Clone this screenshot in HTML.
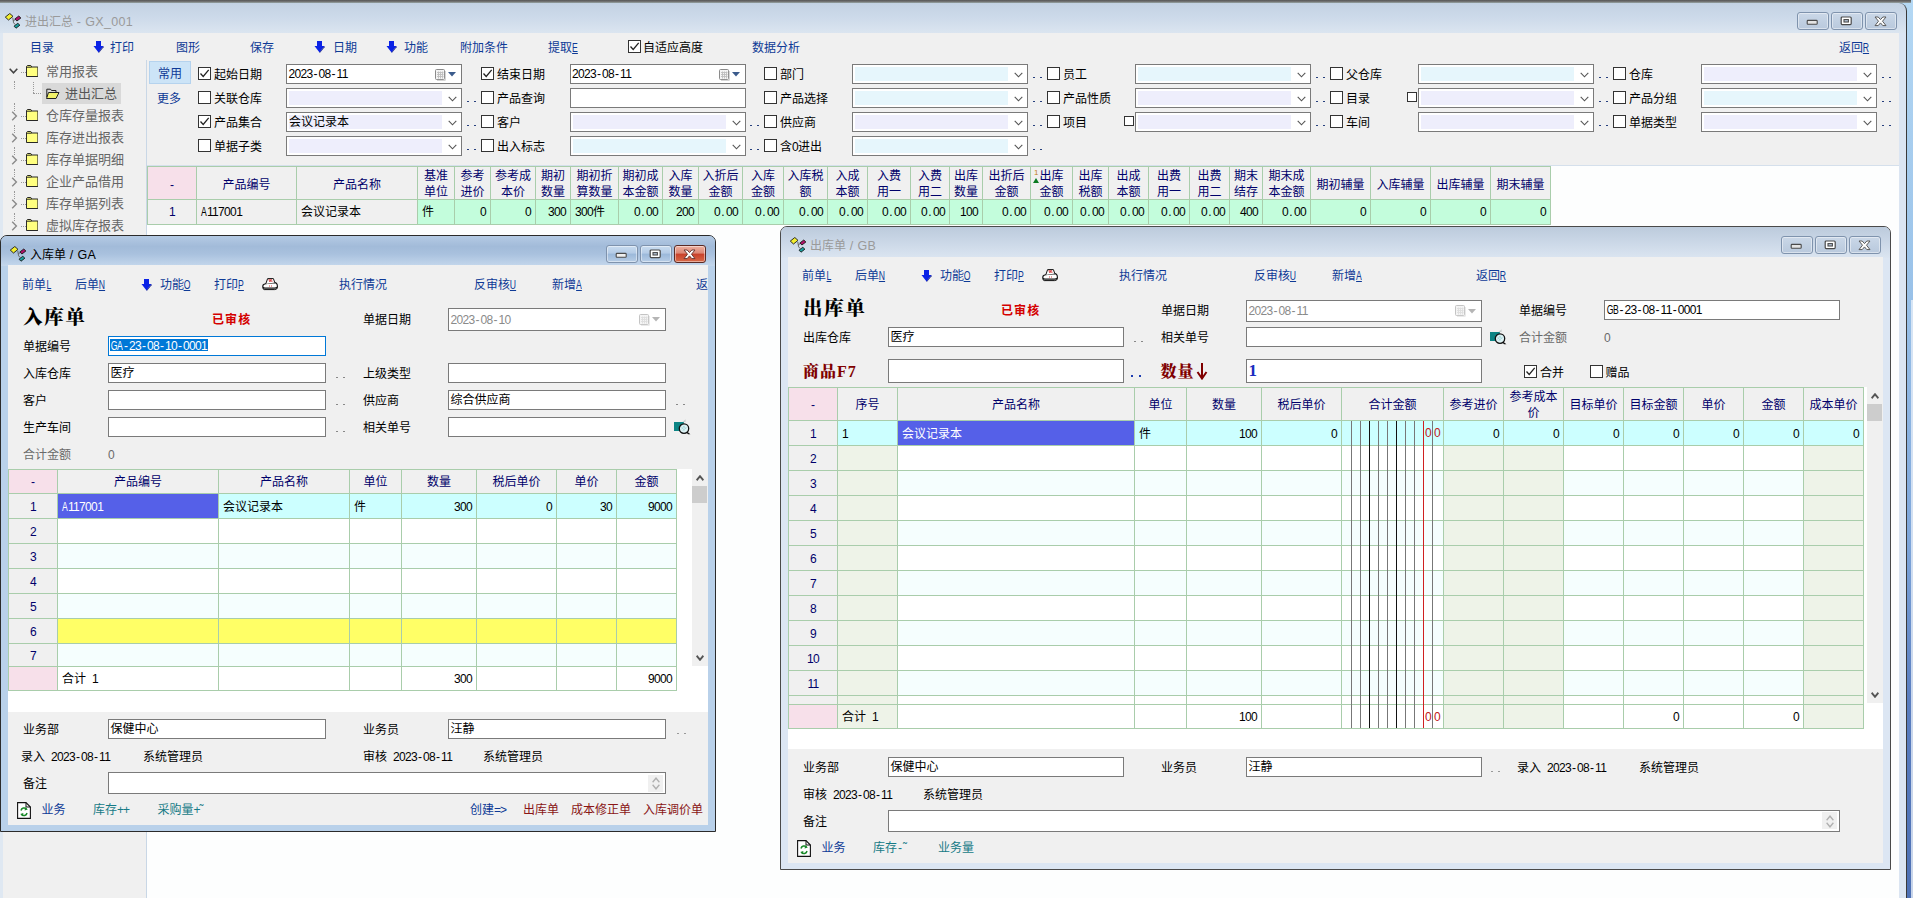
<!DOCTYPE html>
<html lang="zh-CN"><head><meta charset="utf-8"><title>进出汇总 - GX_001</title><style>
html,body{margin:0;padding:0;}
body{width:1913px;height:898px;overflow:hidden;background:#fff;position:relative;font-family:"Liberation Sans","Noto Sans CJK SC",sans-serif;font-size:12px;color:#000;}
#r{position:absolute;left:0;top:0;width:1913px;height:898px;overflow:hidden;}
#r div,#r svg{position:absolute;box-sizing:content-box;}
#r span{position:static;}
.t{white-space:nowrap;font-size:12px;}
.s{font-family:"Liberation Sans","Noto Sans CJK SC",sans-serif;font-size:12px;}
.a{letter-spacing:-0.67px;}
.u{text-decoration:underline;}
.y .ya{font-size:12.5px;letter-spacing:0.35px;}
.h{display:inline-block;width:6px;text-align:center;letter-spacing:0;white-space:pre;}
.hl{display:inline-block;width:10px;margin:0 -2px;text-align:center;letter-spacing:0;transform:scaleX(.72);}
.bl{color:#0e3a96;}
.nv{color:#00006a;}
.gy{color:#6a6a6a;}
.tl{color:#167a86;}
.dr{color:#8a1616;}
.y{font-family:"Liberation Sans","Noto Sans CJK SC",sans-serif;font-size:12px;}
.tr{font-family:"Liberation Sans","Noto Sans CJK SC",sans-serif;font-size:13px;color:#666;}
.big{font-family:"Liberation Serif","Noto Serif CJK SC",serif;font-weight:900;font-size:19.5px;letter-spacing:1.7px;}
.rb{font-weight:bold;color:#d40000;letter-spacing:1.1px;}
.b16{font-family:"Liberation Serif","Noto Serif CJK SC",serif;font-weight:900;font-size:16px;color:#800000;letter-spacing:1px;}
.b16 .a{letter-spacing:1px;}
.c{text-align:center;}
.r{text-align:right;}
</style></head><body><div id="r">
<div style="left:0px;top:0px;width:1913px;height:898px;background:#fdfefe;"></div>
<div style="left:1896px;top:0px;width:17px;height:898px;background:linear-gradient(#b4d8f4 0%,#9cc4ea 30%,#7ea6da 60%,#5a7ec0 78%,#4d70b4 100%);"></div>
<div style="left:1911px;top:300px;width:2px;height:598px;background:rgba(230,238,248,.8);"></div>
<div style="left:0px;top:3px;width:1906px;height:30px;background:linear-gradient(#c3d2e3 0%,#cddaea 50%,#dbe5f0 100%);border-radius:0 8px 0 0;border-right:1px solid #3a3a3a;"></div>
<div style="left:0px;top:0px;width:1911px;height:3px;background:linear-gradient(#555,#777 60%,#9aa);"></div>
<div style="left:0px;top:33px;width:3px;height:865px;background:#dfe8f2;"></div>
<div style="left:3px;top:33px;width:1896px;height:133px;background:#f0f0f0;"></div>
<div style="left:3px;top:60px;width:143px;height:838px;background:#f0f0f0;"></div>
<div style="left:146px;top:60px;width:1px;height:838px;background:#c9d7e6;"></div>
<div style="left:147px;top:165px;width:1752px;height:1px;background:#d5e0ec;"></div>
<div style="left:147px;top:166px;width:1752px;height:732px;background:#fdfefe;"></div>
<div style="left:1899px;top:33px;width:7px;height:865px;background:#dbe5f2;"></div>
<div style="left:1906px;top:30px;width:1px;height:868px;background:#3a3a3a;"></div>
<svg style="left:5px;top:13px" width="17" height="16" viewBox="0 0 17 16"><path d="M7.8 5 L8.6 9.8 L10.2 11.6 M8.3 7.6 L10.4 6.6" fill="none" stroke="#666" stroke-width="1"/><path d="M0.3 4.1 L4.8 0.5 L8 3.4 L3.5 7 Z" fill="#f4ef2e" stroke="#1a1a1a" stroke-width="0.9"/><path d="M9.9 5.9 L13.8 3 L15.9 5 L11.9 8 Z" fill="#b01068" stroke="#1a1a1a" stroke-width="0.9"/><path d="M9 13.2 L12.8 10.3 L14.9 12.2 L11 15.2 Z" fill="#18a0a0" stroke="#1a1a1a" stroke-width="0.9"/></svg>
<div class="t y" style="left:25px;top:13.5px;line-height:16px;height:16px;color:#9a9a9a;">进出汇总<span class="ya"> - GX_001</span></div>
<div style="left:1797px;top:12px;width:29.5px;height:15.5px;border:1px solid #7f93ad;border-radius:3px;box-shadow:inset 0 0 0 1px rgba(255,255,255,.45);background:linear-gradient(#cbd8e8 0%,#c1d0e2 50%,#b9c9dd 100%);"><svg style="left:8px;top:6px" width="13" height="7" viewBox="0 0 13 7"><rect x="1.2" y="1.4" width="10" height="3.8" rx="0.8" fill="#e4e4e4" stroke="#4a4a4a" stroke-width="1.1"/></svg></div>
<div style="left:1831px;top:12px;width:29.5px;height:15.5px;border:1px solid #7f93ad;border-radius:3px;box-shadow:inset 0 0 0 1px rgba(255,255,255,.45);background:linear-gradient(#cbd8e8 0%,#c1d0e2 50%,#b9c9dd 100%);"><svg style="left:8px;top:3px" width="13" height="10" viewBox="0 0 13 10"><rect x="1.2" y="1" width="10" height="7.6" rx="1" fill="#fff" stroke="#4a4a4a" stroke-width="1.2"/><rect x="4" y="3.6" width="4.4" height="2.4" fill="#b8c8dc" stroke="#4a4a4a" stroke-width="1.1"/></svg></div>
<div style="left:1865px;top:12px;width:29.5px;height:15.5px;border:1px solid #7f93ad;border-radius:3px;box-shadow:inset 0 0 0 1px rgba(255,255,255,.45);background:linear-gradient(#cbd8e8 0%,#c1d0e2 50%,#b9c9dd 100%);"><svg style="left:8px;top:2.5px" width="13" height="11" viewBox="0 0 13 11"><path d="M1 1 L4.2 1 L6.5 3.6 L8.8 1 L12 1 L8.5 5.2 L12 9.6 L8.8 9.6 L6.5 6.9 L4.2 9.6 L1 9.6 L4.5 5.2 Z" fill="#fff" stroke="#5a5a5a" stroke-width="1"/></svg></div>
<div class="t s bl" style="left:30px;top:40.5px;line-height:14px;height:14px;">目录</div>
<svg style="left:93px;top:41px" width="11" height="12" viewBox="0 0 11 12"><path d="M3 0 H8 V5 H10.5 L5.5 11.5 L0.5 5 H3 Z" fill="#0a22e6"/><path d="M5.5 11.5 L10.5 5 L10.5 6.2 L5.8 12 Z" fill="#061280"/></svg>
<div class="t s bl" style="left:110px;top:40.5px;line-height:14px;height:14px;">打印</div>
<div class="t s bl" style="left:176px;top:40.5px;line-height:14px;height:14px;">图形</div>
<div class="t s bl" style="left:250px;top:40.5px;line-height:14px;height:14px;">保存</div>
<svg style="left:314px;top:41px" width="11" height="12" viewBox="0 0 11 12"><path d="M3 0 H8 V5 H10.5 L5.5 11.5 L0.5 5 H3 Z" fill="#0a22e6"/><path d="M5.5 11.5 L10.5 5 L10.5 6.2 L5.8 12 Z" fill="#061280"/></svg>
<div class="t s bl" style="left:333px;top:40.5px;line-height:14px;height:14px;">日期</div>
<svg style="left:386px;top:41px" width="11" height="12" viewBox="0 0 11 12"><path d="M3 0 H8 V5 H10.5 L5.5 11.5 L0.5 5 H3 Z" fill="#0a22e6"/><path d="M5.5 11.5 L10.5 5 L10.5 6.2 L5.8 12 Z" fill="#061280"/></svg>
<div class="t s bl" style="left:404px;top:40.5px;line-height:14px;height:14px;">功能</div>
<div class="t s bl" style="left:460px;top:40.5px;line-height:14px;height:14px;">附加条件</div>
<div class="t s bl" style="left:548px;top:40.5px;line-height:14px;height:14px;">提取<span class="a"><span class="hl u">E</span></span></div>
<div style="left:628px;top:40px;width:11px;height:11px;border:1px solid #333;background:#fff;"><svg style="left:0;top:0" width="11" height="11" viewBox="0 0 11 11"><path d="M1.5 5.5 L4.2 8.5 L9.7 1.8" fill="none" stroke="#222" stroke-width="1.3"/></svg></div>
<div class="t s" style="left:643px;top:40.5px;line-height:14px;height:14px;">自适应高度</div>
<div class="t s bl" style="left:752px;top:40.5px;line-height:14px;height:14px;">数据分析</div>
<div class="t s bl" style="left:1839px;top:40.5px;line-height:14px;height:14px;">返回<span class="a"><span class="hl u">R</span></span></div>
<div style="left:14px;top:81px;width:0px;height:8px;border-left:1px dotted #999;"></div>
<div style="left:14px;top:103px;width:0px;height:8px;border-left:1px dotted #999;"></div>
<div style="left:14px;top:125px;width:0px;height:8px;border-left:1px dotted #999;"></div>
<div style="left:14px;top:147px;width:0px;height:8px;border-left:1px dotted #999;"></div>
<div style="left:14px;top:169px;width:0px;height:8px;border-left:1px dotted #999;"></div>
<div style="left:14px;top:191px;width:0px;height:8px;border-left:1px dotted #999;"></div>
<div style="left:14px;top:213px;width:0px;height:8px;border-left:1px dotted #999;"></div>
<svg style="left:9px;top:68px" width="9" height="6" viewBox="0 0 9 6" preserveAspectRatio="none"><path d="M0.7 0.8 L4.5 4.8 L8.3 0.8" fill="none" stroke="#444" stroke-width="1.6"/></svg>
<div style="left:21px;top:71.5px;width:5px;height:0px;border-top:1px dotted #999;"></div>
<svg style="left:26px;top:65px" width="12.4" height="12" viewBox="0 0 13 12" preserveAspectRatio="none"><path d="M0.5 11.5 V1.5 L1.5 0.5 H5 L6 2 H12.5 V11.5 Z" fill="#ffff80" stroke="#222" stroke-width="1"/><path d="M0.5 2.2 H6" stroke="#222" stroke-width="1"/></svg>
<div class="t tr" style="left:46px;top:62.5px;line-height:18px;height:18px;">常用报表</div>
<div style="left:33px;top:93px;width:10px;height:0px;border-top:1px dotted #999;"></div>
<div style="left:33px;top:82px;width:0px;height:11px;border-left:1px dotted #999;"></div>
<div style="left:42px;top:82.5px;width:79px;height:21px;background:#d9d9d9;"></div>
<svg style="left:46px;top:88px" width="14" height="12" viewBox="0 0 14 12"><path d="M0.5 10.5 L2.5 4.5 H13 L10 10.5 Z" fill="#f2f26a" stroke="#222" stroke-width="1"/><path d="M0.8 9 V1.2 H4.5 L5.5 2.5 H10 V4.5" fill="none" stroke="#222" stroke-width="1"/></svg>
<div class="t tr" style="left:65px;top:84.5px;line-height:18px;height:18px;color:#555;">进出汇总</div>
<svg style="left:11px;top:110.5px" width="7" height="10" viewBox="0 0 7 10"><path d="M1.2 0.8 L5.4 5 L1.2 9.2" fill="none" stroke="#8a8a8a" stroke-width="1.4"/></svg>
<div style="left:21px;top:115.5px;width:5px;height:0px;border-top:1px dotted #999;"></div>
<svg style="left:26px;top:109px" width="12.4" height="12" viewBox="0 0 13 12" preserveAspectRatio="none"><path d="M0.5 11.5 V1.5 L1.5 0.5 H5 L6 2 H12.5 V11.5 Z" fill="#ffff80" stroke="#222" stroke-width="1"/><path d="M0.5 2.2 H6" stroke="#222" stroke-width="1"/></svg>
<div class="t tr" style="left:46px;top:106.5px;line-height:18px;height:18px;">仓库存量报表</div>
<svg style="left:11px;top:132.5px" width="7" height="10" viewBox="0 0 7 10"><path d="M1.2 0.8 L5.4 5 L1.2 9.2" fill="none" stroke="#8a8a8a" stroke-width="1.4"/></svg>
<div style="left:21px;top:137.5px;width:5px;height:0px;border-top:1px dotted #999;"></div>
<svg style="left:26px;top:131px" width="12.4" height="12" viewBox="0 0 13 12" preserveAspectRatio="none"><path d="M0.5 11.5 V1.5 L1.5 0.5 H5 L6 2 H12.5 V11.5 Z" fill="#ffff80" stroke="#222" stroke-width="1"/><path d="M0.5 2.2 H6" stroke="#222" stroke-width="1"/></svg>
<div class="t tr" style="left:46px;top:128.5px;line-height:18px;height:18px;">库存进出报表</div>
<svg style="left:11px;top:154.5px" width="7" height="10" viewBox="0 0 7 10"><path d="M1.2 0.8 L5.4 5 L1.2 9.2" fill="none" stroke="#8a8a8a" stroke-width="1.4"/></svg>
<div style="left:21px;top:159.5px;width:5px;height:0px;border-top:1px dotted #999;"></div>
<svg style="left:26px;top:153px" width="12.4" height="12" viewBox="0 0 13 12" preserveAspectRatio="none"><path d="M0.5 11.5 V1.5 L1.5 0.5 H5 L6 2 H12.5 V11.5 Z" fill="#ffff80" stroke="#222" stroke-width="1"/><path d="M0.5 2.2 H6" stroke="#222" stroke-width="1"/></svg>
<div class="t tr" style="left:46px;top:150.5px;line-height:18px;height:18px;">库存单据明细</div>
<svg style="left:11px;top:176.5px" width="7" height="10" viewBox="0 0 7 10"><path d="M1.2 0.8 L5.4 5 L1.2 9.2" fill="none" stroke="#8a8a8a" stroke-width="1.4"/></svg>
<div style="left:21px;top:181.5px;width:5px;height:0px;border-top:1px dotted #999;"></div>
<svg style="left:26px;top:175px" width="12.4" height="12" viewBox="0 0 13 12" preserveAspectRatio="none"><path d="M0.5 11.5 V1.5 L1.5 0.5 H5 L6 2 H12.5 V11.5 Z" fill="#ffff80" stroke="#222" stroke-width="1"/><path d="M0.5 2.2 H6" stroke="#222" stroke-width="1"/></svg>
<div class="t tr" style="left:46px;top:172.5px;line-height:18px;height:18px;">企业产品借用</div>
<svg style="left:11px;top:198.5px" width="7" height="10" viewBox="0 0 7 10"><path d="M1.2 0.8 L5.4 5 L1.2 9.2" fill="none" stroke="#8a8a8a" stroke-width="1.4"/></svg>
<div style="left:21px;top:203.5px;width:5px;height:0px;border-top:1px dotted #999;"></div>
<svg style="left:26px;top:197px" width="12.4" height="12" viewBox="0 0 13 12" preserveAspectRatio="none"><path d="M0.5 11.5 V1.5 L1.5 0.5 H5 L6 2 H12.5 V11.5 Z" fill="#ffff80" stroke="#222" stroke-width="1"/><path d="M0.5 2.2 H6" stroke="#222" stroke-width="1"/></svg>
<div class="t tr" style="left:46px;top:194.5px;line-height:18px;height:18px;">库存单据列表</div>
<svg style="left:11px;top:220.5px" width="7" height="10" viewBox="0 0 7 10"><path d="M1.2 0.8 L5.4 5 L1.2 9.2" fill="none" stroke="#8a8a8a" stroke-width="1.4"/></svg>
<div style="left:21px;top:225.5px;width:5px;height:0px;border-top:1px dotted #999;"></div>
<svg style="left:26px;top:219px" width="12.4" height="12" viewBox="0 0 13 12" preserveAspectRatio="none"><path d="M0.5 11.5 V1.5 L1.5 0.5 H5 L6 2 H12.5 V11.5 Z" fill="#ffff80" stroke="#222" stroke-width="1"/><path d="M0.5 2.2 H6" stroke="#222" stroke-width="1"/></svg>
<div class="t tr" style="left:46px;top:216.5px;line-height:18px;height:18px;">虚拟库存报表</div>
<div style="left:149px;top:61px;width:40px;height:21px;background:#cce4f7;border:1px solid #b5d3ee;"></div>
<div class="t s bl" style="left:158px;top:66.5px;line-height:14px;height:14px;">常用</div>
<div class="t s bl" style="left:157px;top:92px;line-height:14px;height:14px;">更多</div>
<div style="left:198px;top:67px;width:11px;height:11px;border:1px solid #333;background:#fff;"><svg style="left:0;top:0" width="11" height="11" viewBox="0 0 11 11"><path d="M1.5 5.5 L4.2 8.5 L9.7 1.8" fill="none" stroke="#222" stroke-width="1.3"/></svg></div>
<div class="t s" style="left:214px;top:67.5px;line-height:14px;height:14px;">起始日期</div>
<div style="left:286px;top:64px;width:174px;height:18px;border:1px solid #7a7a7a;background:#fff;"></div>
<div class="t s" style="left:288.5px;top:67px;line-height:14px;height:14px;"><span class="a">2023<span class="h">-</span>08<span class="h">-</span>11</span></div>
<svg style="left:435px;top:69px" width="11" height="12" viewBox="0 0 11 12"><rect x="0.5" y="0.5" width="9" height="10" rx="1" fill="#f4f4f4" stroke="#8a8a8a"/><path d="M2 3.5 H8.5 M2 5.5 H8.5 M2 7.5 H8.5 M3.5 2.5 V9.5 M5.5 2.5 V9.5 M7.5 2.5 V9.5" stroke="#bdbdbd" stroke-width="0.9"/><path d="M10.3 2 V11.3 H2" fill="none" stroke="#bdbdbd" stroke-width="0.8"/></svg>
<svg style="left:448px;top:72px" width="8" height="5" viewBox="0 0 8 5"><path d="M0 0 H8 L4 4.5 Z" fill="#3b5b8c"/></svg>
<div style="left:481px;top:67px;width:11px;height:11px;border:1px solid #333;background:#fff;"><svg style="left:0;top:0" width="11" height="11" viewBox="0 0 11 11"><path d="M1.5 5.5 L4.2 8.5 L9.7 1.8" fill="none" stroke="#222" stroke-width="1.3"/></svg></div>
<div class="t s" style="left:497px;top:67.5px;line-height:14px;height:14px;">结束日期</div>
<div style="left:569.5px;top:64px;width:174px;height:18px;border:1px solid #7a7a7a;background:#fff;"></div>
<div class="t s" style="left:572px;top:67px;line-height:14px;height:14px;"><span class="a">2023<span class="h">-</span>08<span class="h">-</span>11</span></div>
<svg style="left:718.5px;top:69px" width="11" height="12" viewBox="0 0 11 12"><rect x="0.5" y="0.5" width="9" height="10" rx="1" fill="#f4f4f4" stroke="#8a8a8a"/><path d="M2 3.5 H8.5 M2 5.5 H8.5 M2 7.5 H8.5 M3.5 2.5 V9.5 M5.5 2.5 V9.5 M7.5 2.5 V9.5" stroke="#bdbdbd" stroke-width="0.9"/><path d="M10.3 2 V11.3 H2" fill="none" stroke="#bdbdbd" stroke-width="0.8"/></svg>
<svg style="left:731.5px;top:72px" width="8" height="5" viewBox="0 0 8 5"><path d="M0 0 H8 L4 4.5 Z" fill="#3b5b8c"/></svg>
<div style="left:764px;top:67px;width:11px;height:11px;border:1px solid #333;background:#fff;"></div>
<div class="t s" style="left:780px;top:67.5px;line-height:14px;height:14px;">部门</div>
<div style="left:852px;top:64px;width:174px;height:18px;border:1px solid #7a7a7a;background:#fff;"></div>
<div style="left:855px;top:67px;width:153px;height:14px;background:#e6f6fc;"></div>
<svg style="left:1014px;top:72px" width="9" height="6" viewBox="0 0 9 6" preserveAspectRatio="none"><path d="M0.7 0.8 L4.5 4.8 L8.3 0.8" fill="none" stroke="#555" stroke-width="1.1"/></svg>
<div style="left:1033px;top:77px;width:2px;height:1.3px;background:#27407e;"></div>
<div style="left:1040px;top:77px;width:2px;height:1.3px;background:#27407e;"></div>
<div style="left:1047px;top:67px;width:11px;height:11px;border:1px solid #333;background:#fff;"></div>
<div class="t s" style="left:1063px;top:67.5px;line-height:14px;height:14px;">员工</div>
<div style="left:1135px;top:64px;width:174px;height:18px;border:1px solid #7a7a7a;background:#fff;"></div>
<div style="left:1138px;top:67px;width:153px;height:14px;background:#e6f6fc;"></div>
<svg style="left:1297px;top:72px" width="9" height="6" viewBox="0 0 9 6" preserveAspectRatio="none"><path d="M0.7 0.8 L4.5 4.8 L8.3 0.8" fill="none" stroke="#555" stroke-width="1.1"/></svg>
<div style="left:1316px;top:77px;width:2px;height:1.3px;background:#27407e;"></div>
<div style="left:1323px;top:77px;width:2px;height:1.3px;background:#27407e;"></div>
<div style="left:1330px;top:67px;width:11px;height:11px;border:1px solid #333;background:#fff;"></div>
<div class="t s" style="left:1346px;top:67.5px;line-height:14px;height:14px;">父仓库</div>
<div style="left:1418px;top:64px;width:174px;height:18px;border:1px solid #7a7a7a;background:#fff;"></div>
<div style="left:1421px;top:67px;width:153px;height:14px;background:#e6f6fc;"></div>
<svg style="left:1580px;top:72px" width="9" height="6" viewBox="0 0 9 6" preserveAspectRatio="none"><path d="M0.7 0.8 L4.5 4.8 L8.3 0.8" fill="none" stroke="#555" stroke-width="1.1"/></svg>
<div style="left:1599px;top:77px;width:2px;height:1.3px;background:#27407e;"></div>
<div style="left:1606px;top:77px;width:2px;height:1.3px;background:#27407e;"></div>
<div style="left:1613px;top:67px;width:11px;height:11px;border:1px solid #333;background:#fff;"></div>
<div class="t s" style="left:1629px;top:67.5px;line-height:14px;height:14px;">仓库</div>
<div style="left:1701px;top:64px;width:174px;height:18px;border:1px solid #7a7a7a;background:#fff;"></div>
<div style="left:1704px;top:67px;width:153px;height:14px;background:#eeeefc;"></div>
<svg style="left:1863px;top:72px" width="9" height="6" viewBox="0 0 9 6" preserveAspectRatio="none"><path d="M0.7 0.8 L4.5 4.8 L8.3 0.8" fill="none" stroke="#555" stroke-width="1.1"/></svg>
<div style="left:1882px;top:77px;width:2px;height:1.3px;background:#27407e;"></div>
<div style="left:1889px;top:77px;width:2px;height:1.3px;background:#27407e;"></div>
<div style="left:198px;top:91px;width:11px;height:11px;border:1px solid #333;background:#fff;"></div>
<div class="t s" style="left:214px;top:91.5px;line-height:14px;height:14px;">关联仓库</div>
<div style="left:286px;top:88px;width:174px;height:18px;border:1px solid #7a7a7a;background:#fff;"></div>
<div style="left:289px;top:91px;width:153px;height:14px;background:#eeeefc;"></div>
<svg style="left:448px;top:96px" width="9" height="6" viewBox="0 0 9 6" preserveAspectRatio="none"><path d="M0.7 0.8 L4.5 4.8 L8.3 0.8" fill="none" stroke="#555" stroke-width="1.1"/></svg>
<div style="left:467px;top:101px;width:2px;height:1.3px;background:#27407e;"></div>
<div style="left:474px;top:101px;width:2px;height:1.3px;background:#27407e;"></div>
<div style="left:481px;top:91px;width:11px;height:11px;border:1px solid #333;background:#fff;"></div>
<div class="t s" style="left:497px;top:91.5px;line-height:14px;height:14px;">产品查询</div>
<div style="left:569.5px;top:88px;width:174px;height:18px;border:1px solid #7a7a7a;background:#fff;"></div>
<div style="left:764px;top:91px;width:11px;height:11px;border:1px solid #333;background:#fff;"></div>
<div class="t s" style="left:780px;top:91.5px;line-height:14px;height:14px;">产品选择</div>
<div style="left:852px;top:88px;width:174px;height:18px;border:1px solid #7a7a7a;background:#fff;"></div>
<div style="left:855px;top:91px;width:153px;height:14px;background:#e6f6fc;"></div>
<svg style="left:1014px;top:96px" width="9" height="6" viewBox="0 0 9 6" preserveAspectRatio="none"><path d="M0.7 0.8 L4.5 4.8 L8.3 0.8" fill="none" stroke="#555" stroke-width="1.1"/></svg>
<div style="left:1033px;top:101px;width:2px;height:1.3px;background:#27407e;"></div>
<div style="left:1040px;top:101px;width:2px;height:1.3px;background:#27407e;"></div>
<div style="left:1047px;top:91px;width:11px;height:11px;border:1px solid #333;background:#fff;"></div>
<div class="t s" style="left:1063px;top:91.5px;line-height:14px;height:14px;">产品性质</div>
<div style="left:1135px;top:88px;width:174px;height:18px;border:1px solid #7a7a7a;background:#fff;"></div>
<div style="left:1138px;top:91px;width:153px;height:14px;background:#eeeefc;"></div>
<svg style="left:1297px;top:96px" width="9" height="6" viewBox="0 0 9 6" preserveAspectRatio="none"><path d="M0.7 0.8 L4.5 4.8 L8.3 0.8" fill="none" stroke="#555" stroke-width="1.1"/></svg>
<div style="left:1316px;top:101px;width:2px;height:1.3px;background:#27407e;"></div>
<div style="left:1323px;top:101px;width:2px;height:1.3px;background:#27407e;"></div>
<div style="left:1330px;top:91px;width:11px;height:11px;border:1px solid #333;background:#fff;"></div>
<div class="t s" style="left:1346px;top:91.5px;line-height:14px;height:14px;">目录</div>
<div style="left:1418px;top:88px;width:174px;height:18px;border:1px solid #7a7a7a;background:#fff;"></div>
<div style="left:1421px;top:91px;width:153px;height:14px;background:#eeeefc;"></div>
<svg style="left:1580px;top:96px" width="9" height="6" viewBox="0 0 9 6" preserveAspectRatio="none"><path d="M0.7 0.8 L4.5 4.8 L8.3 0.8" fill="none" stroke="#555" stroke-width="1.1"/></svg>
<div style="left:1599px;top:101px;width:2px;height:1.3px;background:#27407e;"></div>
<div style="left:1606px;top:101px;width:2px;height:1.3px;background:#27407e;"></div>
<div style="left:1613px;top:91px;width:11px;height:11px;border:1px solid #333;background:#fff;"></div>
<div class="t s" style="left:1629px;top:91.5px;line-height:14px;height:14px;">产品分组</div>
<div style="left:1701px;top:88px;width:174px;height:18px;border:1px solid #7a7a7a;background:#fff;"></div>
<div style="left:1704px;top:91px;width:153px;height:14px;background:#e6f6fc;"></div>
<svg style="left:1863px;top:96px" width="9" height="6" viewBox="0 0 9 6" preserveAspectRatio="none"><path d="M0.7 0.8 L4.5 4.8 L8.3 0.8" fill="none" stroke="#555" stroke-width="1.1"/></svg>
<div style="left:1882px;top:101px;width:2px;height:1.3px;background:#27407e;"></div>
<div style="left:1889px;top:101px;width:2px;height:1.3px;background:#27407e;"></div>
<div style="left:198px;top:115px;width:11px;height:11px;border:1px solid #333;background:#fff;"><svg style="left:0;top:0" width="11" height="11" viewBox="0 0 11 11"><path d="M1.5 5.5 L4.2 8.5 L9.7 1.8" fill="none" stroke="#222" stroke-width="1.3"/></svg></div>
<div class="t s" style="left:214px;top:115.5px;line-height:14px;height:14px;">产品集合</div>
<div style="left:286px;top:112px;width:174px;height:18px;border:1px solid #7a7a7a;background:#fff;"></div>
<div style="left:289px;top:115px;width:153px;height:14px;background:#eeeefc;"></div>
<svg style="left:448px;top:120px" width="9" height="6" viewBox="0 0 9 6" preserveAspectRatio="none"><path d="M0.7 0.8 L4.5 4.8 L8.3 0.8" fill="none" stroke="#555" stroke-width="1.1"/></svg>
<div class="t s" style="left:289px;top:115px;line-height:14px;height:14px;">会议记录本</div>
<div style="left:467px;top:125px;width:2px;height:1.3px;background:#27407e;"></div>
<div style="left:474px;top:125px;width:2px;height:1.3px;background:#27407e;"></div>
<div style="left:481px;top:115px;width:11px;height:11px;border:1px solid #333;background:#fff;"></div>
<div class="t s" style="left:497px;top:115.5px;line-height:14px;height:14px;">客户</div>
<div style="left:569.5px;top:112px;width:174px;height:18px;border:1px solid #7a7a7a;background:#fff;"></div>
<div style="left:572.5px;top:115px;width:153px;height:14px;background:#eeeefc;"></div>
<svg style="left:731.5px;top:120px" width="9" height="6" viewBox="0 0 9 6" preserveAspectRatio="none"><path d="M0.7 0.8 L4.5 4.8 L8.3 0.8" fill="none" stroke="#555" stroke-width="1.1"/></svg>
<div style="left:750px;top:125px;width:2px;height:1.3px;background:#27407e;"></div>
<div style="left:757px;top:125px;width:2px;height:1.3px;background:#27407e;"></div>
<div style="left:764px;top:115px;width:11px;height:11px;border:1px solid #333;background:#fff;"></div>
<div class="t s" style="left:780px;top:115.5px;line-height:14px;height:14px;">供应商</div>
<div style="left:852px;top:112px;width:174px;height:18px;border:1px solid #7a7a7a;background:#fff;"></div>
<div style="left:855px;top:115px;width:153px;height:14px;background:#eeeefc;"></div>
<svg style="left:1014px;top:120px" width="9" height="6" viewBox="0 0 9 6" preserveAspectRatio="none"><path d="M0.7 0.8 L4.5 4.8 L8.3 0.8" fill="none" stroke="#555" stroke-width="1.1"/></svg>
<div style="left:1033px;top:125px;width:2px;height:1.3px;background:#27407e;"></div>
<div style="left:1040px;top:125px;width:2px;height:1.3px;background:#27407e;"></div>
<div style="left:1047px;top:115px;width:11px;height:11px;border:1px solid #333;background:#fff;"></div>
<div class="t s" style="left:1063px;top:115.5px;line-height:14px;height:14px;">项目</div>
<div style="left:1135px;top:112px;width:174px;height:18px;border:1px solid #7a7a7a;background:#fff;"></div>
<div style="left:1138px;top:115px;width:153px;height:14px;background:#eeeefc;"></div>
<svg style="left:1297px;top:120px" width="9" height="6" viewBox="0 0 9 6" preserveAspectRatio="none"><path d="M0.7 0.8 L4.5 4.8 L8.3 0.8" fill="none" stroke="#555" stroke-width="1.1"/></svg>
<div style="left:1316px;top:125px;width:2px;height:1.3px;background:#27407e;"></div>
<div style="left:1323px;top:125px;width:2px;height:1.3px;background:#27407e;"></div>
<div style="left:1330px;top:115px;width:11px;height:11px;border:1px solid #333;background:#fff;"></div>
<div class="t s" style="left:1346px;top:115.5px;line-height:14px;height:14px;">车间</div>
<div style="left:1418px;top:112px;width:174px;height:18px;border:1px solid #7a7a7a;background:#fff;"></div>
<div style="left:1421px;top:115px;width:153px;height:14px;background:#eeeefc;"></div>
<svg style="left:1580px;top:120px" width="9" height="6" viewBox="0 0 9 6" preserveAspectRatio="none"><path d="M0.7 0.8 L4.5 4.8 L8.3 0.8" fill="none" stroke="#555" stroke-width="1.1"/></svg>
<div style="left:1599px;top:125px;width:2px;height:1.3px;background:#27407e;"></div>
<div style="left:1606px;top:125px;width:2px;height:1.3px;background:#27407e;"></div>
<div style="left:1613px;top:115px;width:11px;height:11px;border:1px solid #333;background:#fff;"></div>
<div class="t s" style="left:1629px;top:115.5px;line-height:14px;height:14px;">单据类型</div>
<div style="left:1701px;top:112px;width:174px;height:18px;border:1px solid #7a7a7a;background:#fff;"></div>
<div style="left:1704px;top:115px;width:153px;height:14px;background:#eeeefc;"></div>
<svg style="left:1863px;top:120px" width="9" height="6" viewBox="0 0 9 6" preserveAspectRatio="none"><path d="M0.7 0.8 L4.5 4.8 L8.3 0.8" fill="none" stroke="#555" stroke-width="1.1"/></svg>
<div style="left:1882px;top:125px;width:2px;height:1.3px;background:#27407e;"></div>
<div style="left:1889px;top:125px;width:2px;height:1.3px;background:#27407e;"></div>
<div style="left:198px;top:139px;width:11px;height:11px;border:1px solid #333;background:#fff;"></div>
<div class="t s" style="left:214px;top:139.5px;line-height:14px;height:14px;">单据子类</div>
<div style="left:286px;top:136px;width:174px;height:18px;border:1px solid #7a7a7a;background:#fff;"></div>
<div style="left:289px;top:139px;width:153px;height:14px;background:#eeeefc;"></div>
<svg style="left:448px;top:144px" width="9" height="6" viewBox="0 0 9 6" preserveAspectRatio="none"><path d="M0.7 0.8 L4.5 4.8 L8.3 0.8" fill="none" stroke="#555" stroke-width="1.1"/></svg>
<div style="left:467px;top:149px;width:2px;height:1.3px;background:#27407e;"></div>
<div style="left:474px;top:149px;width:2px;height:1.3px;background:#27407e;"></div>
<div style="left:481px;top:139px;width:11px;height:11px;border:1px solid #333;background:#fff;"></div>
<div class="t s" style="left:497px;top:139.5px;line-height:14px;height:14px;">出入标志</div>
<div style="left:569.5px;top:136px;width:174px;height:18px;border:1px solid #7a7a7a;background:#fff;"></div>
<div style="left:572.5px;top:139px;width:153px;height:14px;background:#e6f6fc;"></div>
<svg style="left:731.5px;top:144px" width="9" height="6" viewBox="0 0 9 6" preserveAspectRatio="none"><path d="M0.7 0.8 L4.5 4.8 L8.3 0.8" fill="none" stroke="#555" stroke-width="1.1"/></svg>
<div style="left:750px;top:149px;width:2px;height:1.3px;background:#27407e;"></div>
<div style="left:757px;top:149px;width:2px;height:1.3px;background:#27407e;"></div>
<div style="left:764px;top:139px;width:11px;height:11px;border:1px solid #333;background:#fff;"></div>
<div class="t s" style="left:780px;top:139.5px;line-height:14px;height:14px;">含<span class="a">0</span>进出</div>
<div style="left:852px;top:136px;width:174px;height:18px;border:1px solid #7a7a7a;background:#fff;"></div>
<div style="left:855px;top:139px;width:153px;height:14px;background:#e6f6fc;"></div>
<svg style="left:1014px;top:144px" width="9" height="6" viewBox="0 0 9 6" preserveAspectRatio="none"><path d="M0.7 0.8 L4.5 4.8 L8.3 0.8" fill="none" stroke="#555" stroke-width="1.1"/></svg>
<div style="left:1033px;top:149px;width:2px;height:1.3px;background:#27407e;"></div>
<div style="left:1040px;top:149px;width:2px;height:1.3px;background:#27407e;"></div>
<div style="left:1124px;top:116px;width:8px;height:8px;border:1px solid #333;background:#fff;"></div>
<div style="left:1407px;top:92px;width:8px;height:8px;border:1px solid #333;background:#fff;"></div>
<div style="left:147px;top:166px;width:1404px;height:59px;background:#a9cdab;"></div>
<div style="left:148px;top:167px;width:48px;height:32px;background:#f7e0ea;"></div>
<div style="left:148px;top:200px;width:48px;height:24px;background:#f0f0f0;"></div>
<div class="t s nv c" style="left:145px;top:177.5px;line-height:14px;height:14px;width:54px;"><span class="a"><span class="h">-</span></span></div>
<div class="t s nv c" style="left:148px;top:204.5px;line-height:14px;height:14px;width:48px;"><span class="a">1</span></div>
<div style="left:197px;top:167px;width:99px;height:32px;background:#f0f0f0;"></div>
<div style="left:197px;top:200px;width:99px;height:24px;background:#f0f0f0;"></div>
<div class="t s nv c" style="left:194px;top:177.5px;line-height:14px;height:14px;width:105px;">产品编号</div>
<div class="t s" style="left:201px;top:204.5px;line-height:14px;height:14px;"><span class="a"><span class="hl">A</span>117001</span></div>
<div style="left:297px;top:167px;width:120px;height:32px;background:#f0f0f0;"></div>
<div style="left:297px;top:200px;width:120px;height:24px;background:#f0f0f0;"></div>
<div class="t s nv c" style="left:294px;top:177.5px;line-height:14px;height:14px;width:126px;">产品名称</div>
<div class="t s" style="left:301px;top:204.5px;line-height:14px;height:14px;">会议记录本</div>
<div style="left:418px;top:167px;width:36px;height:32px;background:#f0f0f0;"></div>
<div style="left:418px;top:200px;width:36px;height:24px;background:#c3fddc;"></div>
<div class="t s nv c" style="left:415px;top:169.5px;line-height:12px;height:12px;width:42px;">基准</div>
<div class="t s nv c" style="left:415px;top:185.5px;line-height:12px;height:12px;width:42px;">单位</div>
<div class="t s" style="left:422px;top:204.5px;line-height:14px;height:14px;">件</div>
<div style="left:455px;top:167px;width:35px;height:32px;background:#f0f0f0;"></div>
<div style="left:455px;top:200px;width:35px;height:24px;background:#c3fddc;"></div>
<div class="t s nv c" style="left:452px;top:169.5px;line-height:12px;height:12px;width:41px;">参考</div>
<div class="t s nv c" style="left:452px;top:185.5px;line-height:12px;height:12px;width:41px;">进价</div>
<div class="t s r" style="left:455px;top:204.5px;line-height:14px;height:14px;width:31px;"><span class="a">0</span></div>
<div style="left:491px;top:167px;width:44px;height:32px;background:#f0f0f0;"></div>
<div style="left:491px;top:200px;width:44px;height:24px;background:#c3fddc;"></div>
<div class="t s nv c" style="left:488px;top:169.5px;line-height:12px;height:12px;width:50px;">参考成</div>
<div class="t s nv c" style="left:488px;top:185.5px;line-height:12px;height:12px;width:50px;">本价</div>
<div class="t s r" style="left:491px;top:204.5px;line-height:14px;height:14px;width:40px;"><span class="a">0</span></div>
<div style="left:536px;top:167px;width:34px;height:32px;background:#f0f0f0;"></div>
<div style="left:536px;top:200px;width:34px;height:24px;background:#c3fddc;"></div>
<div class="t s nv c" style="left:533px;top:169.5px;line-height:12px;height:12px;width:40px;">期初</div>
<div class="t s nv c" style="left:533px;top:185.5px;line-height:12px;height:12px;width:40px;">数量</div>
<div class="t s r" style="left:536px;top:204.5px;line-height:14px;height:14px;width:30px;"><span class="a">300</span></div>
<div style="left:571px;top:167px;width:47px;height:32px;background:#f0f0f0;"></div>
<div style="left:571px;top:200px;width:47px;height:24px;background:#c3fddc;"></div>
<div class="t s nv c" style="left:568px;top:169.5px;line-height:12px;height:12px;width:53px;">期初折</div>
<div class="t s nv c" style="left:568px;top:185.5px;line-height:12px;height:12px;width:53px;">算数量</div>
<div class="t s" style="left:575px;top:204.5px;line-height:14px;height:14px;"><span class="a">300</span>件</div>
<div style="left:619px;top:167px;width:43px;height:32px;background:#f0f0f0;"></div>
<div style="left:619px;top:200px;width:43px;height:24px;background:#c3fddc;"></div>
<div class="t s nv c" style="left:616px;top:169.5px;line-height:12px;height:12px;width:49px;">期初成</div>
<div class="t s nv c" style="left:616px;top:185.5px;line-height:12px;height:12px;width:49px;">本金额</div>
<div class="t s r" style="left:619px;top:204.5px;line-height:14px;height:14px;width:39px;"><span class="a">0<span class="h">.</span>00</span></div>
<div style="left:663px;top:167px;width:35px;height:32px;background:#f0f0f0;"></div>
<div style="left:663px;top:200px;width:35px;height:24px;background:#c3fddc;"></div>
<div class="t s nv c" style="left:660px;top:169.5px;line-height:12px;height:12px;width:41px;">入库</div>
<div class="t s nv c" style="left:660px;top:185.5px;line-height:12px;height:12px;width:41px;">数量</div>
<div class="t s r" style="left:663px;top:204.5px;line-height:14px;height:14px;width:31px;"><span class="a">200</span></div>
<div style="left:699px;top:167px;width:43px;height:32px;background:#f0f0f0;"></div>
<div style="left:699px;top:200px;width:43px;height:24px;background:#c3fddc;"></div>
<div class="t s nv c" style="left:696px;top:169.5px;line-height:12px;height:12px;width:49px;">入折后</div>
<div class="t s nv c" style="left:696px;top:185.5px;line-height:12px;height:12px;width:49px;">金额</div>
<div class="t s r" style="left:699px;top:204.5px;line-height:14px;height:14px;width:39px;"><span class="a">0<span class="h">.</span>00</span></div>
<div style="left:743px;top:167px;width:40px;height:32px;background:#f0f0f0;"></div>
<div style="left:743px;top:200px;width:40px;height:24px;background:#c3fddc;"></div>
<div class="t s nv c" style="left:740px;top:169.5px;line-height:12px;height:12px;width:46px;">入库</div>
<div class="t s nv c" style="left:740px;top:185.5px;line-height:12px;height:12px;width:46px;">金额</div>
<div class="t s r" style="left:743px;top:204.5px;line-height:14px;height:14px;width:36px;"><span class="a">0<span class="h">.</span>00</span></div>
<div style="left:784px;top:167px;width:43px;height:32px;background:#f0f0f0;"></div>
<div style="left:784px;top:200px;width:43px;height:24px;background:#c3fddc;"></div>
<div class="t s nv c" style="left:781px;top:169.5px;line-height:12px;height:12px;width:49px;">入库税</div>
<div class="t s nv c" style="left:781px;top:185.5px;line-height:12px;height:12px;width:49px;">额</div>
<div class="t s r" style="left:784px;top:204.5px;line-height:14px;height:14px;width:39px;"><span class="a">0<span class="h">.</span>00</span></div>
<div style="left:828px;top:167px;width:39px;height:32px;background:#f0f0f0;"></div>
<div style="left:828px;top:200px;width:39px;height:24px;background:#c3fddc;"></div>
<div class="t s nv c" style="left:825px;top:169.5px;line-height:12px;height:12px;width:45px;">入成</div>
<div class="t s nv c" style="left:825px;top:185.5px;line-height:12px;height:12px;width:45px;">本额</div>
<div class="t s r" style="left:828px;top:204.5px;line-height:14px;height:14px;width:35px;"><span class="a">0<span class="h">.</span>00</span></div>
<div style="left:868px;top:167px;width:42px;height:32px;background:#f0f0f0;"></div>
<div style="left:868px;top:200px;width:42px;height:24px;background:#c3fddc;"></div>
<div class="t s nv c" style="left:865px;top:169.5px;line-height:12px;height:12px;width:48px;">入费</div>
<div class="t s nv c" style="left:865px;top:185.5px;line-height:12px;height:12px;width:48px;">用一</div>
<div class="t s r" style="left:868px;top:204.5px;line-height:14px;height:14px;width:38px;"><span class="a">0<span class="h">.</span>00</span></div>
<div style="left:911px;top:167px;width:38px;height:32px;background:#f0f0f0;"></div>
<div style="left:911px;top:200px;width:38px;height:24px;background:#c3fddc;"></div>
<div class="t s nv c" style="left:908px;top:169.5px;line-height:12px;height:12px;width:44px;">入费</div>
<div class="t s nv c" style="left:908px;top:185.5px;line-height:12px;height:12px;width:44px;">用二</div>
<div class="t s r" style="left:911px;top:204.5px;line-height:14px;height:14px;width:34px;"><span class="a">0<span class="h">.</span>00</span></div>
<div style="left:950px;top:167px;width:32px;height:32px;background:#f0f0f0;"></div>
<div style="left:950px;top:200px;width:32px;height:24px;background:#c3fddc;"></div>
<div class="t s nv c" style="left:947px;top:169.5px;line-height:12px;height:12px;width:38px;">出库</div>
<div class="t s nv c" style="left:947px;top:185.5px;line-height:12px;height:12px;width:38px;">数量</div>
<div class="t s r" style="left:950px;top:204.5px;line-height:14px;height:14px;width:28px;"><span class="a">100</span></div>
<div style="left:983px;top:167px;width:47px;height:32px;background:#f0f0f0;"></div>
<div style="left:983px;top:200px;width:47px;height:24px;background:#c3fddc;"></div>
<div class="t s nv c" style="left:980px;top:169.5px;line-height:12px;height:12px;width:53px;">出折后</div>
<div class="t s nv c" style="left:980px;top:185.5px;line-height:12px;height:12px;width:53px;">金额</div>
<div class="t s r" style="left:983px;top:204.5px;line-height:14px;height:14px;width:43px;"><span class="a">0<span class="h">.</span>00</span></div>
<div style="left:1031px;top:167px;width:41px;height:32px;background:#f0f0f0;"></div>
<div style="left:1031px;top:200px;width:41px;height:24px;background:#c3fddc;"></div>
<div class="t s nv c" style="left:1028px;top:169.5px;line-height:12px;height:12px;width:47px;">出库</div>
<div class="t s nv c" style="left:1028px;top:185.5px;line-height:12px;height:12px;width:47px;">金额</div>
<div class="t s r" style="left:1031px;top:204.5px;line-height:14px;height:14px;width:37px;"><span class="a">0<span class="h">.</span>00</span></div>
<div style="left:1073px;top:167px;width:35px;height:32px;background:#f0f0f0;"></div>
<div style="left:1073px;top:200px;width:35px;height:24px;background:#c3fddc;"></div>
<div class="t s nv c" style="left:1070px;top:169.5px;line-height:12px;height:12px;width:41px;">出库</div>
<div class="t s nv c" style="left:1070px;top:185.5px;line-height:12px;height:12px;width:41px;">税额</div>
<div class="t s r" style="left:1073px;top:204.5px;line-height:14px;height:14px;width:31px;"><span class="a">0<span class="h">.</span>00</span></div>
<div style="left:1109px;top:167px;width:39px;height:32px;background:#f0f0f0;"></div>
<div style="left:1109px;top:200px;width:39px;height:24px;background:#c3fddc;"></div>
<div class="t s nv c" style="left:1106px;top:169.5px;line-height:12px;height:12px;width:45px;">出成</div>
<div class="t s nv c" style="left:1106px;top:185.5px;line-height:12px;height:12px;width:45px;">本额</div>
<div class="t s r" style="left:1109px;top:204.5px;line-height:14px;height:14px;width:35px;"><span class="a">0<span class="h">.</span>00</span></div>
<div style="left:1149px;top:167px;width:40px;height:32px;background:#f0f0f0;"></div>
<div style="left:1149px;top:200px;width:40px;height:24px;background:#c3fddc;"></div>
<div class="t s nv c" style="left:1146px;top:169.5px;line-height:12px;height:12px;width:46px;">出费</div>
<div class="t s nv c" style="left:1146px;top:185.5px;line-height:12px;height:12px;width:46px;">用一</div>
<div class="t s r" style="left:1149px;top:204.5px;line-height:14px;height:14px;width:36px;"><span class="a">0<span class="h">.</span>00</span></div>
<div style="left:1190px;top:167px;width:39px;height:32px;background:#f0f0f0;"></div>
<div style="left:1190px;top:200px;width:39px;height:24px;background:#c3fddc;"></div>
<div class="t s nv c" style="left:1187px;top:169.5px;line-height:12px;height:12px;width:45px;">出费</div>
<div class="t s nv c" style="left:1187px;top:185.5px;line-height:12px;height:12px;width:45px;">用二</div>
<div class="t s r" style="left:1190px;top:204.5px;line-height:14px;height:14px;width:35px;"><span class="a">0<span class="h">.</span>00</span></div>
<div style="left:1230px;top:167px;width:32px;height:32px;background:#f0f0f0;"></div>
<div style="left:1230px;top:200px;width:32px;height:24px;background:#c3fddc;"></div>
<div class="t s nv c" style="left:1227px;top:169.5px;line-height:12px;height:12px;width:38px;">期末</div>
<div class="t s nv c" style="left:1227px;top:185.5px;line-height:12px;height:12px;width:38px;">结存</div>
<div class="t s r" style="left:1230px;top:204.5px;line-height:14px;height:14px;width:28px;"><span class="a">400</span></div>
<div style="left:1263px;top:167px;width:47px;height:32px;background:#f0f0f0;"></div>
<div style="left:1263px;top:200px;width:47px;height:24px;background:#c3fddc;"></div>
<div class="t s nv c" style="left:1260px;top:169.5px;line-height:12px;height:12px;width:53px;">期末成</div>
<div class="t s nv c" style="left:1260px;top:185.5px;line-height:12px;height:12px;width:53px;">本金额</div>
<div class="t s r" style="left:1263px;top:204.5px;line-height:14px;height:14px;width:43px;"><span class="a">0<span class="h">.</span>00</span></div>
<div style="left:1311px;top:167px;width:59px;height:32px;background:#f0f0f0;"></div>
<div style="left:1311px;top:200px;width:59px;height:24px;background:#c3fddc;"></div>
<div class="t s nv c" style="left:1308px;top:177.5px;line-height:14px;height:14px;width:65px;">期初辅量</div>
<div class="t s r" style="left:1311px;top:204.5px;line-height:14px;height:14px;width:55px;"><span class="a">0</span></div>
<div style="left:1371px;top:167px;width:59px;height:32px;background:#f0f0f0;"></div>
<div style="left:1371px;top:200px;width:59px;height:24px;background:#c3fddc;"></div>
<div class="t s nv c" style="left:1368px;top:177.5px;line-height:14px;height:14px;width:65px;">入库辅量</div>
<div class="t s r" style="left:1371px;top:204.5px;line-height:14px;height:14px;width:55px;"><span class="a">0</span></div>
<div style="left:1431px;top:167px;width:59px;height:32px;background:#f0f0f0;"></div>
<div style="left:1431px;top:200px;width:59px;height:24px;background:#c3fddc;"></div>
<div class="t s nv c" style="left:1428px;top:177.5px;line-height:14px;height:14px;width:65px;">出库辅量</div>
<div class="t s r" style="left:1431px;top:204.5px;line-height:14px;height:14px;width:55px;"><span class="a">0</span></div>
<div style="left:1491px;top:167px;width:59px;height:32px;background:#f0f0f0;"></div>
<div style="left:1491px;top:200px;width:59px;height:24px;background:#c3fddc;"></div>
<div class="t s nv c" style="left:1488px;top:177.5px;line-height:14px;height:14px;width:65px;">期末辅量</div>
<div class="t s r" style="left:1491px;top:204.5px;line-height:14px;height:14px;width:55px;"><span class="a">0</span></div>
<div class="t s" style="left:1034px;top:169px;line-height:8px;height:8px;font-size:8px;color:#c08020;"><span class="a">1</span></div>
<svg style="left:1033px;top:178px" width="6" height="5" viewBox="0 0 6 5"><path d="M3 0 L6 5 H0 Z" fill="#0a7a20"/></svg>
<div style="left:0px;top:235px;width:714px;height:595px;border:1px solid #2b2b2b;border-radius:7px 7px 0 0;background:#b9d1ea;"></div>
<div style="left:1px;top:236px;width:714px;height:30px;border-radius:6px 6px 0 0;background:linear-gradient(#b4cae4 0%,#a2bbd9 35%,#a9c1de 60%,#c4d7ec 100%);"></div>
<div style="left:8px;top:265px;width:700px;height:560px;background:#f0f0f0;"></div>
<svg style="left:10px;top:246px" width="17" height="16" viewBox="0 0 17 16"><path d="M7.8 5 L8.6 9.8 L10.2 11.6 M8.3 7.6 L10.4 6.6" fill="none" stroke="#666" stroke-width="1"/><path d="M0.3 4.1 L4.8 0.5 L8 3.4 L3.5 7 Z" fill="#f4ef2e" stroke="#1a1a1a" stroke-width="0.9"/><path d="M9.9 5.9 L13.8 3 L15.9 5 L11.9 8 Z" fill="#b01068" stroke="#1a1a1a" stroke-width="0.9"/><path d="M9 13.2 L12.8 10.3 L14.9 12.2 L11 15.2 Z" fill="#18a0a0" stroke="#1a1a1a" stroke-width="0.9"/></svg>
<div class="t y" style="left:30px;top:247px;line-height:16px;height:16px;">入库单<span class="ya"> / GA</span></div>
<div style="left:606px;top:245px;width:29.5px;height:15.5px;border:1px solid #7f93ad;border-radius:3px;box-shadow:inset 0 0 0 1px rgba(255,255,255,.45);background:linear-gradient(#c9dcf0 0%,#b4cbe6 45%,#9bb8da 50%,#b7cde6 100%);"><svg style="left:8px;top:6px" width="13" height="7" viewBox="0 0 13 7"><rect x="1.2" y="1.4" width="10" height="3.8" rx="0.8" fill="#f0f0f0" stroke="#4a4a4a" stroke-width="1.1"/></svg></div>
<div style="left:640px;top:245px;width:29.5px;height:15.5px;border:1px solid #7f93ad;border-radius:3px;box-shadow:inset 0 0 0 1px rgba(255,255,255,.45);background:linear-gradient(#c9dcf0 0%,#b4cbe6 45%,#9bb8da 50%,#b7cde6 100%);"><svg style="left:8px;top:3px" width="13" height="10" viewBox="0 0 13 10"><rect x="1.2" y="1" width="10" height="7.6" rx="1" fill="#fff" stroke="#4a4a4a" stroke-width="1.2"/><rect x="4" y="3.6" width="4.4" height="2.4" fill="#b8c8dc" stroke="#4a4a4a" stroke-width="1.1"/></svg></div>
<div style="left:674px;top:245px;width:29.5px;height:15.5px;border:1px solid #7f93ad;border-radius:3px;box-shadow:inset 0 0 0 1px rgba(255,255,255,.45);background:linear-gradient(#eeb0a0 0%,#dc8674 45%,#c8402a 50%,#d86a48 100%);border-color:#5a2a24;"><svg style="left:8px;top:2.5px" width="13" height="11" viewBox="0 0 13 11"><path d="M1 1 L4.2 1 L6.5 3.6 L8.8 1 L12 1 L8.5 5.2 L12 9.6 L8.8 9.6 L6.5 6.9 L4.2 9.6 L1 9.6 L4.5 5.2 Z" fill="#fff" stroke="#6a3a34" stroke-width="1"/></svg></div>
<div class="t s bl" style="left:22px;top:277.5px;line-height:14px;height:14px;">前单<span class="a"><span class="hl u">L</span></span></div>
<div class="t s bl" style="left:75px;top:277.5px;line-height:14px;height:14px;">后单<span class="a"><span class="hl u">N</span></span></div>
<svg style="left:141px;top:279px" width="11" height="12" viewBox="0 0 11 12"><path d="M3 0 H8 V5 H10.5 L5.5 11.5 L0.5 5 H3 Z" fill="#0a22e6"/><path d="M5.5 11.5 L10.5 5 L10.5 6.2 L5.8 12 Z" fill="#061280"/></svg>
<div class="t s bl" style="left:160px;top:277.5px;line-height:14px;height:14px;">功能<span class="a"><span class="hl u">O</span></span></div>
<div class="t s bl" style="left:214px;top:277.5px;line-height:14px;height:14px;">打印<span class="a"><span class="hl u">P</span></span></div>
<svg style="left:262px;top:278px" width="16" height="13" viewBox="0 0 16 13"><path d="M2.2 11.6 H12.5 Q15.4 11.4 15.4 9.6 V8.6 H1 V10 Q1 11.4 2.2 11.6 Z" fill="#9a9a9a" stroke="#111" stroke-width="1"/><path d="M0.8 8.6 Q0.6 6.2 3.6 5.8 L12.6 4.6 Q15.4 4.6 15.4 8.6 Q15 10 12.6 10 H3 Q0.9 10 0.8 8.6 Z" fill="#fff" stroke="#111" stroke-width="1.1"/><path d="M3.8 5.9 L5.6 0.6 L11.4 0.6 L12.8 4.6" fill="#fff" stroke="#111" stroke-width="1"/><path d="M6.3 1.8 L9.8 1.8 L7 3.2 L10.6 3.2" fill="none" stroke="#d02828" stroke-width="0.8"/><path d="M7 8 H8 M9 8 H10" stroke="#d02828" stroke-width="0.9"/></svg>
<div class="t s bl" style="left:339px;top:277.5px;line-height:14px;height:14px;">执行情况</div>
<div class="t s bl" style="left:474px;top:277.5px;line-height:14px;height:14px;">反审核<span class="a"><span class="hl u">U</span></span></div>
<div class="t s bl" style="left:552px;top:277.5px;line-height:14px;height:14px;">新增<span class="a"><span class="hl u">A</span></span></div>
<div style="left:690px;top:270px;width:18px;height:30px;overflow:hidden;"><div class="t s bl" style="left:6px;top:7.5px;line-height:14px;height:14px;">返回<span class="a u">R</span></div></div>
<div class="t big" style="left:23px;top:306px;line-height:24px;height:24px;">入库单</div>
<div class="t s rb" style="left:212px;top:312.5px;line-height:14px;height:14px;">已审核</div>
<div class="t s" style="left:363px;top:312.5px;line-height:14px;height:14px;">单据日期</div>
<div style="left:448px;top:308px;width:216px;height:21px;border:1px solid #7a7a7a;background:#fff;"></div>
<div class="t s" style="left:450.5px;top:312.5px;line-height:14px;height:14px;color:#8a8a8a;"><span class="a">2023<span class="h">-</span>08<span class="h">-</span>10</span></div>
<svg style="left:639px;top:313.5px" width="11" height="12" viewBox="0 0 11 12"><rect x="0.5" y="0.5" width="9" height="10" rx="1" fill="#f4f4f4" stroke="#c4c4c4"/><path d="M2 3.5 H8.5 M2 5.5 H8.5 M2 7.5 H8.5 M3.5 2.5 V9.5 M5.5 2.5 V9.5 M7.5 2.5 V9.5" stroke="#dedede" stroke-width="0.9"/><path d="M10.3 2 V11.3 H2" fill="none" stroke="#dedede" stroke-width="0.8"/></svg>
<svg style="left:652px;top:317px" width="8" height="5" viewBox="0 0 8 5"><path d="M0 0 H8 L4 4.5 Z" fill="#b5b5b5"/></svg>
<div class="t s" style="left:23px;top:339.5px;line-height:14px;height:14px;">单据编号</div>
<div style="left:108px;top:336px;width:216px;height:18px;border:1px solid #0078d7;background:#fff;"></div>
<div style="left:110px;top:339px;width:98px;height:12px;background:#0078d7;"></div>
<div class="t s" style="left:111px;top:339px;line-height:14px;height:14px;color:#fff;"><span class="a"><span class="hl">G</span><span class="hl">A</span><span class="h">-</span>23<span class="h">-</span>08<span class="h">-</span>10<span class="h">-</span>0001</span></div>
<div class="t s" style="left:23px;top:366.5px;line-height:14px;height:14px;">入库仓库</div>
<div style="left:108px;top:363px;width:216px;height:18px;border:1px solid #7a7a7a;background:#fff;"></div>
<div class="t s" style="left:110.5px;top:366px;line-height:14px;height:14px;">医疗</div>
<div style="left:336px;top:376.5px;width:2px;height:1.3px;background:#888;"></div>
<div style="left:343px;top:376.5px;width:2px;height:1.3px;background:#888;"></div>
<div class="t s" style="left:363px;top:366.5px;line-height:14px;height:14px;">上级类型</div>
<div style="left:448px;top:363px;width:216px;height:18px;border:1px solid #7a7a7a;background:#fff;"></div>
<div class="t s" style="left:23px;top:393.5px;line-height:14px;height:14px;">客户</div>
<div style="left:108px;top:390px;width:216px;height:18px;border:1px solid #7a7a7a;background:#fff;"></div>
<div style="left:336px;top:403.5px;width:2px;height:1.3px;background:#888;"></div>
<div style="left:343px;top:403.5px;width:2px;height:1.3px;background:#888;"></div>
<div class="t s" style="left:363px;top:393.5px;line-height:14px;height:14px;">供应商</div>
<div style="left:448px;top:390px;width:216px;height:18px;border:1px solid #7a7a7a;background:#fff;"></div>
<div class="t s" style="left:450.5px;top:393px;line-height:14px;height:14px;">综合供应商</div>
<div style="left:676px;top:403.5px;width:2px;height:1.3px;background:#888;"></div>
<div style="left:683px;top:403.5px;width:2px;height:1.3px;background:#888;"></div>
<div class="t s" style="left:23px;top:420.5px;line-height:14px;height:14px;">生产车间</div>
<div style="left:108px;top:417px;width:216px;height:18px;border:1px solid #7a7a7a;background:#fff;"></div>
<div style="left:336px;top:430.5px;width:2px;height:1.3px;background:#888;"></div>
<div style="left:343px;top:430.5px;width:2px;height:1.3px;background:#888;"></div>
<div class="t s" style="left:363px;top:420.5px;line-height:14px;height:14px;">相关单号</div>
<div style="left:448px;top:417px;width:216px;height:18px;border:1px solid #7a7a7a;background:#fff;"></div>
<svg style="left:673px;top:419px" width="18" height="16" viewBox="0 0 18 16"><path d="M9.5 3 L12.6 0.2 V3 Z" fill="#c9cfcf"/><rect x="1" y="3" width="9.8" height="9" fill="#0c8484"/><circle cx="11" cy="9.6" r="4.7" fill="#dff3f5" stroke="#111" stroke-width="1.3"/><path d="M8.3 8 L11.5 11.2 M9.8 6.6 L13 9.8 M8 10.6 L12 6.6 M9.6 12 L13.4 8.2" stroke="#8cc8cc" stroke-width="0.6"/><path d="M14 12.4 L17.4 15.2 L15 15.2 L13.4 13.4 Z" fill="#111"/></svg>
<div class="t s gy" style="left:23px;top:447.5px;line-height:14px;height:14px;">合计金额</div>
<div class="t s gy" style="left:108px;top:447.5px;line-height:14px;height:14px;"><span class="a">0</span></div>
<div style="left:8px;top:469px;width:684px;height:242.5px;background:#fff;"></div>
<div style="left:692px;top:665px;width:16px;height:46.5px;background:#fff;"></div>
<div style="left:8px;top:469px;width:669px;height:222px;background:#a9cdab;"></div>
<div style="left:9px;top:470px;width:48px;height:23px;background:#f7e0ea;"></div>
<div class="t s nv c" style="left:6px;top:475px;line-height:14px;height:14px;width:54px;"><span class="a"><span class="h">-</span></span></div>
<div style="left:9px;top:494px;width:48px;height:24px;background:#f0f0f0;"></div>
<div class="t s nv c" style="left:9px;top:499.5px;line-height:14px;height:14px;width:48px;"><span class="a">1</span></div>
<div style="left:9px;top:519px;width:48px;height:24px;background:#f0f0f0;"></div>
<div class="t s nv c" style="left:9px;top:524.5px;line-height:14px;height:14px;width:48px;"><span class="a">2</span></div>
<div style="left:9px;top:544px;width:48px;height:24px;background:#f0f0f0;"></div>
<div class="t s nv c" style="left:9px;top:549.5px;line-height:14px;height:14px;width:48px;"><span class="a">3</span></div>
<div style="left:9px;top:569px;width:48px;height:24px;background:#f0f0f0;"></div>
<div class="t s nv c" style="left:9px;top:574.5px;line-height:14px;height:14px;width:48px;"><span class="a">4</span></div>
<div style="left:9px;top:594px;width:48px;height:24px;background:#f0f0f0;"></div>
<div class="t s nv c" style="left:9px;top:599.5px;line-height:14px;height:14px;width:48px;"><span class="a">5</span></div>
<div style="left:9px;top:619px;width:48px;height:24px;background:#f0f0f0;"></div>
<div class="t s nv c" style="left:9px;top:624.5px;line-height:14px;height:14px;width:48px;"><span class="a">6</span></div>
<div style="left:9px;top:644px;width:48px;height:22px;background:#f0f0f0;"></div>
<div class="t s nv c" style="left:9px;top:648.5px;line-height:14px;height:14px;width:48px;"><span class="a">7</span></div>
<div style="left:9px;top:667px;width:48px;height:23px;background:#f7e0ea;"></div>
<div style="left:58px;top:470px;width:160px;height:23px;background:#f0f0f0;"></div>
<div class="t s nv c" style="left:55px;top:475px;line-height:14px;height:14px;width:166px;">产品编号</div>
<div style="left:58px;top:494px;width:160px;height:24px;background:#5560e8;"></div>
<div class="t s" style="left:62px;top:499.5px;line-height:14px;height:14px;color:#fff;"><span class="a"><span class="hl">A</span>117001</span></div>
<div style="left:58px;top:519px;width:160px;height:24px;background:#ffffff;"></div>
<div style="left:58px;top:544px;width:160px;height:24px;background:#f5fefe;"></div>
<div style="left:58px;top:569px;width:160px;height:24px;background:#ffffff;"></div>
<div style="left:58px;top:594px;width:160px;height:24px;background:#f5fefe;"></div>
<div style="left:58px;top:619px;width:160px;height:24px;background:#ffff66;"></div>
<div style="left:58px;top:644px;width:160px;height:22px;background:#f5fefe;"></div>
<div style="left:58px;top:667px;width:160px;height:23px;background:#fff;"></div>
<div class="t s" style="left:62px;top:672px;line-height:14px;height:14px;">合计<span class="a"><span class="h"> </span>1</span></div>
<div style="left:219px;top:470px;width:130px;height:23px;background:#f0f0f0;"></div>
<div class="t s nv c" style="left:216px;top:475px;line-height:14px;height:14px;width:136px;">产品名称</div>
<div style="left:219px;top:494px;width:130px;height:24px;background:#ccffff;"></div>
<div class="t s" style="left:223px;top:499.5px;line-height:14px;height:14px;">会议记录本</div>
<div style="left:219px;top:519px;width:130px;height:24px;background:#ffffff;"></div>
<div style="left:219px;top:544px;width:130px;height:24px;background:#f5fefe;"></div>
<div style="left:219px;top:569px;width:130px;height:24px;background:#ffffff;"></div>
<div style="left:219px;top:594px;width:130px;height:24px;background:#f5fefe;"></div>
<div style="left:219px;top:619px;width:130px;height:24px;background:#ffff66;"></div>
<div style="left:219px;top:644px;width:130px;height:22px;background:#f5fefe;"></div>
<div style="left:219px;top:667px;width:130px;height:23px;background:#fff;"></div>
<div style="left:350px;top:470px;width:51px;height:23px;background:#f0f0f0;"></div>
<div class="t s nv c" style="left:347px;top:475px;line-height:14px;height:14px;width:57px;">单位</div>
<div style="left:350px;top:494px;width:51px;height:24px;background:#ccffff;"></div>
<div class="t s" style="left:354px;top:499.5px;line-height:14px;height:14px;">件</div>
<div style="left:350px;top:519px;width:51px;height:24px;background:#ffffff;"></div>
<div style="left:350px;top:544px;width:51px;height:24px;background:#f5fefe;"></div>
<div style="left:350px;top:569px;width:51px;height:24px;background:#ffffff;"></div>
<div style="left:350px;top:594px;width:51px;height:24px;background:#f5fefe;"></div>
<div style="left:350px;top:619px;width:51px;height:24px;background:#ffff66;"></div>
<div style="left:350px;top:644px;width:51px;height:22px;background:#f5fefe;"></div>
<div style="left:350px;top:667px;width:51px;height:23px;background:#fff;"></div>
<div style="left:402px;top:470px;width:74px;height:23px;background:#f0f0f0;"></div>
<div class="t s nv c" style="left:399px;top:475px;line-height:14px;height:14px;width:80px;">数量</div>
<div style="left:402px;top:494px;width:74px;height:24px;background:#ccffff;"></div>
<div class="t s r" style="left:402px;top:499.5px;line-height:14px;height:14px;width:70px;"><span class="a">300</span></div>
<div style="left:402px;top:519px;width:74px;height:24px;background:#ffffff;"></div>
<div style="left:402px;top:544px;width:74px;height:24px;background:#f5fefe;"></div>
<div style="left:402px;top:569px;width:74px;height:24px;background:#ffffff;"></div>
<div style="left:402px;top:594px;width:74px;height:24px;background:#f5fefe;"></div>
<div style="left:402px;top:619px;width:74px;height:24px;background:#ffff66;"></div>
<div style="left:402px;top:644px;width:74px;height:22px;background:#f5fefe;"></div>
<div style="left:402px;top:667px;width:74px;height:23px;background:#fff;"></div>
<div class="t s r" style="left:402px;top:672px;line-height:14px;height:14px;width:70px;"><span class="a">300</span></div>
<div style="left:477px;top:470px;width:79px;height:23px;background:#f0f0f0;"></div>
<div class="t s nv c" style="left:474px;top:475px;line-height:14px;height:14px;width:85px;">税后单价</div>
<div style="left:477px;top:494px;width:79px;height:24px;background:#ccffff;"></div>
<div class="t s r" style="left:477px;top:499.5px;line-height:14px;height:14px;width:75px;"><span class="a">0</span></div>
<div style="left:477px;top:519px;width:79px;height:24px;background:#ffffff;"></div>
<div style="left:477px;top:544px;width:79px;height:24px;background:#f5fefe;"></div>
<div style="left:477px;top:569px;width:79px;height:24px;background:#ffffff;"></div>
<div style="left:477px;top:594px;width:79px;height:24px;background:#f5fefe;"></div>
<div style="left:477px;top:619px;width:79px;height:24px;background:#ffff66;"></div>
<div style="left:477px;top:644px;width:79px;height:22px;background:#f5fefe;"></div>
<div style="left:477px;top:667px;width:79px;height:23px;background:#fff;"></div>
<div style="left:557px;top:470px;width:59px;height:23px;background:#f0f0f0;"></div>
<div class="t s nv c" style="left:554px;top:475px;line-height:14px;height:14px;width:65px;">单价</div>
<div style="left:557px;top:494px;width:59px;height:24px;background:#ccffff;"></div>
<div class="t s r" style="left:557px;top:499.5px;line-height:14px;height:14px;width:55px;"><span class="a">30</span></div>
<div style="left:557px;top:519px;width:59px;height:24px;background:#ffffff;"></div>
<div style="left:557px;top:544px;width:59px;height:24px;background:#f5fefe;"></div>
<div style="left:557px;top:569px;width:59px;height:24px;background:#ffffff;"></div>
<div style="left:557px;top:594px;width:59px;height:24px;background:#f5fefe;"></div>
<div style="left:557px;top:619px;width:59px;height:24px;background:#ffff66;"></div>
<div style="left:557px;top:644px;width:59px;height:22px;background:#f5fefe;"></div>
<div style="left:557px;top:667px;width:59px;height:23px;background:#fff;"></div>
<div style="left:617px;top:470px;width:59px;height:23px;background:#f0f0f0;"></div>
<div class="t s nv c" style="left:614px;top:475px;line-height:14px;height:14px;width:65px;">金额</div>
<div style="left:617px;top:494px;width:59px;height:24px;background:#ccffff;"></div>
<div class="t s r" style="left:617px;top:499.5px;line-height:14px;height:14px;width:55px;"><span class="a">9000</span></div>
<div style="left:617px;top:519px;width:59px;height:24px;background:#ffffff;"></div>
<div style="left:617px;top:544px;width:59px;height:24px;background:#f5fefe;"></div>
<div style="left:617px;top:569px;width:59px;height:24px;background:#ffffff;"></div>
<div style="left:617px;top:594px;width:59px;height:24px;background:#f5fefe;"></div>
<div style="left:617px;top:619px;width:59px;height:24px;background:#ffff66;"></div>
<div style="left:617px;top:644px;width:59px;height:22px;background:#f5fefe;"></div>
<div style="left:617px;top:667px;width:59px;height:23px;background:#fff;"></div>
<div class="t s r" style="left:617px;top:672px;line-height:14px;height:14px;width:55px;"><span class="a">9000</span></div>
<div style="left:692px;top:469px;width:16px;height:197px;background:#f0f0f0;"></div>
<svg style="left:695.5px;top:475px" width="8" height="6" viewBox="0 0 9 6" preserveAspectRatio="none"><path d="M0.7 5.2 L4.5 1.2 L8.3 5.2" fill="none" stroke="#555" stroke-width="2"/></svg>
<svg style="left:695.5px;top:655px" width="8" height="6" viewBox="0 0 9 6" preserveAspectRatio="none"><path d="M0.7 0.8 L4.5 4.8 L8.3 0.8" fill="none" stroke="#555" stroke-width="2"/></svg>
<div style="left:692px;top:486px;width:15px;height:17px;background:#cdcdcd;"></div>
<div class="t s" style="left:23px;top:722.5px;line-height:14px;height:14px;">业务部</div>
<div style="left:108px;top:719px;width:216px;height:18px;border:1px solid #7a7a7a;background:#fff;"></div>
<div class="t s" style="left:110.5px;top:722px;line-height:14px;height:14px;">保健中心</div>
<div class="t s" style="left:363px;top:722.5px;line-height:14px;height:14px;">业务员</div>
<div style="left:448px;top:719px;width:216px;height:18px;border:1px solid #7a7a7a;background:#fff;"></div>
<div class="t s" style="left:450.5px;top:722px;line-height:14px;height:14px;">汪静</div>
<div style="left:677px;top:732.5px;width:2px;height:1.3px;background:#999;"></div>
<div style="left:684px;top:732.5px;width:2px;height:1.3px;background:#999;"></div>
<div class="t s" style="left:21px;top:749.5px;line-height:14px;height:14px;">录入<span class="a"><span class="h"> </span>2023<span class="h">-</span>08<span class="h">-</span>11</span></div>
<div class="t s" style="left:143px;top:749.5px;line-height:14px;height:14px;">系统管理员</div>
<div class="t s" style="left:363px;top:749.5px;line-height:14px;height:14px;">审核<span class="a"><span class="h"> </span>2023<span class="h">-</span>08<span class="h">-</span>11</span></div>
<div class="t s" style="left:483px;top:749.5px;line-height:14px;height:14px;">系统管理员</div>
<div class="t s" style="left:23px;top:776.5px;line-height:14px;height:14px;">备注</div>
<div style="left:108px;top:772px;width:556px;height:20px;border:1px solid #7a7a7a;background:#fff;"></div>
<div style="left:648px;top:774.5px;width:15px;height:17px;background:#f0f0f0;"></div>
<svg style="left:651.5px;top:777px" width="8" height="6" viewBox="0 0 9 6" preserveAspectRatio="none"><path d="M0.7 5.2 L4.5 1.2 L8.3 5.2" fill="none" stroke="#b0b0b0" stroke-width="1.5"/></svg>
<svg style="left:651.5px;top:784px" width="8" height="6" viewBox="0 0 9 6" preserveAspectRatio="none"><path d="M0.7 0.8 L4.5 4.8 L8.3 0.8" fill="none" stroke="#b0b0b0" stroke-width="1.5"/></svg>
<svg style="left:17px;top:802px" width="14" height="17" viewBox="0 0 14 17"><path d="M0.6 0.6 H9 L13.4 5 V16.4 H0.6 Z" fill="#fff" stroke="#111" stroke-width="1.1"/><path d="M9 0.6 V5 H13.4" fill="none" stroke="#111" stroke-width="1"/><path d="M4 8.5 A3.2 3.2 0 0 1 9.5 7 M10 11 A3.2 3.2 0 0 1 4.5 12.5" fill="none" stroke="#1a8a2a" stroke-width="1.5"/><path d="M8.2 5.2 L10.8 7.6 L7.6 8.4 Z M5.8 14.3 L3.2 11.9 L6.4 11.1 Z" fill="#1a8a2a"/></svg>
<div class="t s bl" style="left:41.5px;top:802.5px;line-height:14px;height:14px;">业务</div>
<div class="t s tl" style="left:93px;top:802.5px;line-height:14px;height:14px;">库存<span class="a"><span class="h">+</span><span class="h">+</span></span></div>
<div class="t s tl" style="left:157.5px;top:802.5px;line-height:14px;height:14px;">采购量<span class="a"><span class="h">+</span></span>˜</div>
<div class="t s bl" style="left:470px;top:802.5px;line-height:14px;height:14px;">创建<span class="a"><span class="h">=</span><span class="h">&gt;</span></span></div>
<div class="t s dr" style="left:523px;top:802.5px;line-height:14px;height:14px;">出库单</div>
<div class="t s dr" style="left:571px;top:802.5px;line-height:14px;height:14px;">成本修正单</div>
<div class="t s dr" style="left:643px;top:802.5px;line-height:14px;height:14px;">入库调价单</div>
<div style="left:780px;top:226px;width:1109px;height:642px;border:1px solid #4a4a4a;border-radius:7px 7px 0 0;background:#dce6f3;"></div>
<div style="left:781px;top:227px;width:1109px;height:31px;border-radius:6px 6px 0 0;background:linear-gradient(#bccbdc 0%,#c8d5e5 40%,#dbe5f1 100%);"></div>
<div style="left:788px;top:257px;width:1095px;height:606px;background:#f0f0f0;"></div>
<svg style="left:789.5px;top:237px" width="17" height="16" viewBox="0 0 17 16"><path d="M7.8 5 L8.6 9.8 L10.2 11.6 M8.3 7.6 L10.4 6.6" fill="none" stroke="#666" stroke-width="1"/><path d="M0.3 4.1 L4.8 0.5 L8 3.4 L3.5 7 Z" fill="#f4ef2e" stroke="#1a1a1a" stroke-width="0.9"/><path d="M9.9 5.9 L13.8 3 L15.9 5 L11.9 8 Z" fill="#b01068" stroke="#1a1a1a" stroke-width="0.9"/><path d="M9 13.2 L12.8 10.3 L14.9 12.2 L11 15.2 Z" fill="#18a0a0" stroke="#1a1a1a" stroke-width="0.9"/></svg>
<div class="t y" style="left:810px;top:238px;line-height:16px;height:16px;color:#9a9a9a;">出库单<span class="ya"> / GB</span></div>
<div style="left:1781px;top:236px;width:29.5px;height:15.5px;border:1px solid #7f93ad;border-radius:3px;box-shadow:inset 0 0 0 1px rgba(255,255,255,.45);background:linear-gradient(#cbd8e8 0%,#c1d0e2 50%,#b9c9dd 100%);"><svg style="left:8px;top:6px" width="13" height="7" viewBox="0 0 13 7"><rect x="1.2" y="1.4" width="10" height="3.8" rx="0.8" fill="#e4e4e4" stroke="#4a4a4a" stroke-width="1.1"/></svg></div>
<div style="left:1815px;top:236px;width:29.5px;height:15.5px;border:1px solid #7f93ad;border-radius:3px;box-shadow:inset 0 0 0 1px rgba(255,255,255,.45);background:linear-gradient(#cbd8e8 0%,#c1d0e2 50%,#b9c9dd 100%);"><svg style="left:8px;top:3px" width="13" height="10" viewBox="0 0 13 10"><rect x="1.2" y="1" width="10" height="7.6" rx="1" fill="#fff" stroke="#4a4a4a" stroke-width="1.2"/><rect x="4" y="3.6" width="4.4" height="2.4" fill="#b8c8dc" stroke="#4a4a4a" stroke-width="1.1"/></svg></div>
<div style="left:1849px;top:236px;width:29.5px;height:15.5px;border:1px solid #7f93ad;border-radius:3px;box-shadow:inset 0 0 0 1px rgba(255,255,255,.45);background:linear-gradient(#cbd8e8 0%,#c1d0e2 50%,#b9c9dd 100%);"><svg style="left:8px;top:2.5px" width="13" height="11" viewBox="0 0 13 11"><path d="M1 1 L4.2 1 L6.5 3.6 L8.8 1 L12 1 L8.5 5.2 L12 9.6 L8.8 9.6 L6.5 6.9 L4.2 9.6 L1 9.6 L4.5 5.2 Z" fill="#fff" stroke="#5a5a5a" stroke-width="1"/></svg></div>
<div class="t s bl" style="left:802px;top:268.5px;line-height:14px;height:14px;">前单<span class="a"><span class="hl u">L</span></span></div>
<div class="t s bl" style="left:855px;top:268.5px;line-height:14px;height:14px;">后单<span class="a"><span class="hl u">N</span></span></div>
<svg style="left:921px;top:270px" width="11" height="12" viewBox="0 0 11 12"><path d="M3 0 H8 V5 H10.5 L5.5 11.5 L0.5 5 H3 Z" fill="#0a22e6"/><path d="M5.5 11.5 L10.5 5 L10.5 6.2 L5.8 12 Z" fill="#061280"/></svg>
<div class="t s bl" style="left:940px;top:268.5px;line-height:14px;height:14px;">功能<span class="a"><span class="hl u">O</span></span></div>
<div class="t s bl" style="left:994px;top:268.5px;line-height:14px;height:14px;">打印<span class="a"><span class="hl u">P</span></span></div>
<svg style="left:1042px;top:269px" width="16" height="13" viewBox="0 0 16 13"><path d="M2.2 11.6 H12.5 Q15.4 11.4 15.4 9.6 V8.6 H1 V10 Q1 11.4 2.2 11.6 Z" fill="#9a9a9a" stroke="#111" stroke-width="1"/><path d="M0.8 8.6 Q0.6 6.2 3.6 5.8 L12.6 4.6 Q15.4 4.6 15.4 8.6 Q15 10 12.6 10 H3 Q0.9 10 0.8 8.6 Z" fill="#fff" stroke="#111" stroke-width="1.1"/><path d="M3.8 5.9 L5.6 0.6 L11.4 0.6 L12.8 4.6" fill="#fff" stroke="#111" stroke-width="1"/><path d="M6.3 1.8 L9.8 1.8 L7 3.2 L10.6 3.2" fill="none" stroke="#d02828" stroke-width="0.8"/><path d="M7 8 H8 M9 8 H10" stroke="#d02828" stroke-width="0.9"/></svg>
<div class="t s bl" style="left:1119px;top:268.5px;line-height:14px;height:14px;">执行情况</div>
<div class="t s bl" style="left:1254px;top:268.5px;line-height:14px;height:14px;">反审核<span class="a"><span class="hl u">U</span></span></div>
<div class="t s bl" style="left:1332px;top:268.5px;line-height:14px;height:14px;">新增<span class="a"><span class="hl u">A</span></span></div>
<div class="t s bl" style="left:1476px;top:268.5px;line-height:14px;height:14px;">返回<span class="a"><span class="hl u">R</span></span></div>
<div class="t big" style="left:803px;top:297px;line-height:24px;height:24px;">出库单</div>
<div class="t s rb" style="left:1001px;top:303.5px;line-height:14px;height:14px;">已审核</div>
<div class="t s" style="left:1161px;top:303.5px;line-height:14px;height:14px;">单据日期</div>
<div style="left:1246px;top:299.5px;width:234px;height:20.5px;border:1px solid #7a7a7a;background:#fff;"></div>
<div class="t s" style="left:1248.5px;top:303.75px;line-height:14px;height:14px;color:#8a8a8a;"><span class="a">2023<span class="h">-</span>08<span class="h">-</span>11</span></div>
<svg style="left:1454.5px;top:305px" width="11" height="12" viewBox="0 0 11 12"><rect x="0.5" y="0.5" width="9" height="10" rx="1" fill="#f4f4f4" stroke="#c4c4c4"/><path d="M2 3.5 H8.5 M2 5.5 H8.5 M2 7.5 H8.5 M3.5 2.5 V9.5 M5.5 2.5 V9.5 M7.5 2.5 V9.5" stroke="#dedede" stroke-width="0.9"/><path d="M10.3 2 V11.3 H2" fill="none" stroke="#dedede" stroke-width="0.8"/></svg>
<svg style="left:1468px;top:308.5px" width="8" height="5" viewBox="0 0 8 5"><path d="M0 0 H8 L4 4.5 Z" fill="#b5b5b5"/></svg>
<div class="t s" style="left:1519px;top:303.5px;line-height:14px;height:14px;">单据编号</div>
<div style="left:1604px;top:300px;width:234px;height:18px;border:1px solid #7a7a7a;background:#fff;"></div>
<div class="t s" style="left:1606.5px;top:303px;line-height:14px;height:14px;"><span class="a"><span class="hl">G</span><span class="hl">B</span><span class="h">-</span>23<span class="h">-</span>08<span class="h">-</span>11<span class="h">-</span>0001</span></div>
<div class="t s" style="left:803px;top:330.5px;line-height:14px;height:14px;">出库仓库</div>
<div style="left:888px;top:327px;width:234px;height:18px;border:1px solid #7a7a7a;background:#fff;"></div>
<div class="t s" style="left:890.5px;top:330px;line-height:14px;height:14px;">医疗</div>
<div style="left:1134px;top:340.5px;width:2px;height:1.3px;background:#888;"></div>
<div style="left:1141px;top:340.5px;width:2px;height:1.3px;background:#888;"></div>
<div class="t s" style="left:1161px;top:330.5px;line-height:14px;height:14px;">相关单号</div>
<div style="left:1246px;top:327px;width:234px;height:18px;border:1px solid #7a7a7a;background:#fff;"></div>
<svg style="left:1489px;top:329px" width="18" height="16" viewBox="0 0 18 16"><path d="M9.5 3 L12.6 0.2 V3 Z" fill="#c9cfcf"/><rect x="1" y="3" width="9.8" height="9" fill="#0c8484"/><circle cx="11" cy="9.6" r="4.7" fill="#dff3f5" stroke="#111" stroke-width="1.3"/><path d="M8.3 8 L11.5 11.2 M9.8 6.6 L13 9.8 M8 10.6 L12 6.6 M9.6 12 L13.4 8.2" stroke="#8cc8cc" stroke-width="0.6"/><path d="M14 12.4 L17.4 15.2 L15 15.2 L13.4 13.4 Z" fill="#111"/></svg>
<div class="t s gy" style="left:1519px;top:330.5px;line-height:14px;height:14px;">合计金额</div>
<div class="t s gy" style="left:1604px;top:330.5px;line-height:14px;height:14px;"><span class="a">0</span></div>
<div class="t b16" style="left:803px;top:361.5px;line-height:20px;height:20px;">商品<span class="ya">F7</span></div>
<div style="left:888px;top:359px;width:234px;height:22px;border:1px solid #7a7a7a;background:#fff;"></div>
<div style="left:1131px;top:375px;width:2.4px;height:2.4px;background:#1c3cb0;"></div>
<div style="left:1139px;top:375px;width:2.4px;height:2.4px;background:#1c3cb0;"></div>
<div class="t b16" style="left:1160.5px;top:361.5px;line-height:20px;height:20px;">数量</div>
<svg style="left:1196px;top:362px" width="12" height="18" viewBox="0 0 12 18"><path d="M6 1 V15 M1.5 10 L6 16.5 L10.5 10" fill="none" stroke="#800000" stroke-width="2"/></svg>
<div style="left:1246px;top:359px;width:234px;height:22px;border:1px solid #7a7a7a;background:#fff;"></div>
<div class="t " style="left:1248.5px;top:364px;line-height:14px;height:14px;color:#1c2cc0;font-family:'Liberation Serif',serif;font-size:17px;font-weight:bold;"><span class="a">1</span></div>
<div style="left:1524px;top:365px;width:11px;height:11px;border:1px solid #333;background:#fff;"><svg style="left:0;top:0" width="11" height="11" viewBox="0 0 11 11"><path d="M1.5 5.5 L4.2 8.5 L9.7 1.8" fill="none" stroke="#222" stroke-width="1.3"/></svg></div>
<div class="t s" style="left:1540px;top:365.5px;line-height:14px;height:14px;">合并</div>
<div style="left:1590px;top:365px;width:11px;height:11px;border:1px solid #333;background:#fff;"></div>
<div class="t s" style="left:1605.5px;top:365.5px;line-height:14px;height:14px;">赠品</div>
<div style="left:788px;top:387px;width:1079px;height:362px;background:#fff;"></div>
<div style="left:1867px;top:703px;width:16px;height:46px;background:#fff;"></div>
<div style="left:788px;top:387px;width:1076px;height:342px;background:#a9cdab;"></div>
<div style="left:789px;top:388px;width:48px;height:32px;background:#f7e0ea;"></div>
<div class="t s nv c" style="left:786px;top:398px;line-height:14px;height:14px;width:54px;"><span class="a"><span class="h">-</span></span></div>
<div style="left:789px;top:421px;width:48px;height:24px;background:#f0f0f0;"></div>
<div class="t s nv c" style="left:789px;top:426.5px;line-height:14px;height:14px;width:48px;"><span class="a">1</span></div>
<div style="left:789px;top:446px;width:48px;height:24px;background:#f0f0f0;"></div>
<div class="t s nv c" style="left:789px;top:451.5px;line-height:14px;height:14px;width:48px;"><span class="a">2</span></div>
<div style="left:789px;top:471px;width:48px;height:24px;background:#f0f0f0;"></div>
<div class="t s nv c" style="left:789px;top:476.5px;line-height:14px;height:14px;width:48px;"><span class="a">3</span></div>
<div style="left:789px;top:496px;width:48px;height:24px;background:#f0f0f0;"></div>
<div class="t s nv c" style="left:789px;top:501.5px;line-height:14px;height:14px;width:48px;"><span class="a">4</span></div>
<div style="left:789px;top:521px;width:48px;height:24px;background:#f0f0f0;"></div>
<div class="t s nv c" style="left:789px;top:526.5px;line-height:14px;height:14px;width:48px;"><span class="a">5</span></div>
<div style="left:789px;top:546px;width:48px;height:24px;background:#f0f0f0;"></div>
<div class="t s nv c" style="left:789px;top:551.5px;line-height:14px;height:14px;width:48px;"><span class="a">6</span></div>
<div style="left:789px;top:571px;width:48px;height:24px;background:#f0f0f0;"></div>
<div class="t s nv c" style="left:789px;top:576.5px;line-height:14px;height:14px;width:48px;"><span class="a">7</span></div>
<div style="left:789px;top:596px;width:48px;height:24px;background:#f0f0f0;"></div>
<div class="t s nv c" style="left:789px;top:601.5px;line-height:14px;height:14px;width:48px;"><span class="a">8</span></div>
<div style="left:789px;top:621px;width:48px;height:24px;background:#f0f0f0;"></div>
<div class="t s nv c" style="left:789px;top:626.5px;line-height:14px;height:14px;width:48px;"><span class="a">9</span></div>
<div style="left:789px;top:646px;width:48px;height:24px;background:#f0f0f0;"></div>
<div class="t s nv c" style="left:789px;top:651.5px;line-height:14px;height:14px;width:48px;"><span class="a">10</span></div>
<div style="left:789px;top:671px;width:48px;height:24px;background:#f0f0f0;"></div>
<div class="t s nv c" style="left:789px;top:676.5px;line-height:14px;height:14px;width:48px;"><span class="a">11</span></div>
<div style="left:789px;top:696px;width:48px;height:8px;background:#f0f0f0;"></div>
<div style="left:789px;top:705px;width:48px;height:23px;background:#f7e0ea;"></div>
<div style="left:838px;top:388px;width:59px;height:32px;background:#f0f0f0;"></div>
<div class="t s nv c" style="left:835px;top:398px;line-height:14px;height:14px;width:65px;">序号</div>
<div style="left:838px;top:421px;width:59px;height:24px;background:#ccffff;"></div>
<div class="t s" style="left:842px;top:426.5px;line-height:14px;height:14px;"><span class="a">1</span></div>
<div style="left:838px;top:446px;width:59px;height:24px;background:#eef3e8;"></div>
<div style="left:838px;top:471px;width:59px;height:24px;background:#eef3e8;"></div>
<div style="left:838px;top:496px;width:59px;height:24px;background:#eef3e8;"></div>
<div style="left:838px;top:521px;width:59px;height:24px;background:#eef3e8;"></div>
<div style="left:838px;top:546px;width:59px;height:24px;background:#eef3e8;"></div>
<div style="left:838px;top:571px;width:59px;height:24px;background:#eef3e8;"></div>
<div style="left:838px;top:596px;width:59px;height:24px;background:#eef3e8;"></div>
<div style="left:838px;top:621px;width:59px;height:24px;background:#eef3e8;"></div>
<div style="left:838px;top:646px;width:59px;height:24px;background:#eef3e8;"></div>
<div style="left:838px;top:671px;width:59px;height:24px;background:#eef3e8;"></div>
<div style="left:838px;top:696px;width:59px;height:8px;background:#eef3e8;"></div>
<div style="left:838px;top:705px;width:59px;height:23px;background:#eef3e8;"></div>
<div class="t s" style="left:842px;top:710px;line-height:14px;height:14px;">合计<span class="a"><span class="h"> </span>1</span></div>
<div style="left:898px;top:388px;width:236px;height:32px;background:#f0f0f0;"></div>
<div class="t s nv c" style="left:895px;top:398px;line-height:14px;height:14px;width:242px;">产品名称</div>
<div style="left:898px;top:421px;width:236px;height:24px;background:#5560e8;"></div>
<div class="t s" style="left:902px;top:426.5px;line-height:14px;height:14px;color:#fff;">会议记录本</div>
<div style="left:898px;top:446px;width:236px;height:24px;background:#ffffff;"></div>
<div style="left:898px;top:471px;width:236px;height:24px;background:#f5fefe;"></div>
<div style="left:898px;top:496px;width:236px;height:24px;background:#ffffff;"></div>
<div style="left:898px;top:521px;width:236px;height:24px;background:#f5fefe;"></div>
<div style="left:898px;top:546px;width:236px;height:24px;background:#ffffff;"></div>
<div style="left:898px;top:571px;width:236px;height:24px;background:#f5fefe;"></div>
<div style="left:898px;top:596px;width:236px;height:24px;background:#ffffff;"></div>
<div style="left:898px;top:621px;width:236px;height:24px;background:#f5fefe;"></div>
<div style="left:898px;top:646px;width:236px;height:24px;background:#ffffff;"></div>
<div style="left:898px;top:671px;width:236px;height:24px;background:#f5fefe;"></div>
<div style="left:898px;top:696px;width:236px;height:8px;background:#ffffff;"></div>
<div style="left:898px;top:705px;width:236px;height:23px;background:#fff;"></div>
<div style="left:1135px;top:388px;width:51px;height:32px;background:#f0f0f0;"></div>
<div class="t s nv c" style="left:1132px;top:398px;line-height:14px;height:14px;width:57px;">单位</div>
<div style="left:1135px;top:421px;width:51px;height:24px;background:#ccffff;"></div>
<div class="t s" style="left:1139px;top:426.5px;line-height:14px;height:14px;">件</div>
<div style="left:1135px;top:446px;width:51px;height:24px;background:#ffffff;"></div>
<div style="left:1135px;top:471px;width:51px;height:24px;background:#f5fefe;"></div>
<div style="left:1135px;top:496px;width:51px;height:24px;background:#ffffff;"></div>
<div style="left:1135px;top:521px;width:51px;height:24px;background:#f5fefe;"></div>
<div style="left:1135px;top:546px;width:51px;height:24px;background:#ffffff;"></div>
<div style="left:1135px;top:571px;width:51px;height:24px;background:#f5fefe;"></div>
<div style="left:1135px;top:596px;width:51px;height:24px;background:#ffffff;"></div>
<div style="left:1135px;top:621px;width:51px;height:24px;background:#f5fefe;"></div>
<div style="left:1135px;top:646px;width:51px;height:24px;background:#ffffff;"></div>
<div style="left:1135px;top:671px;width:51px;height:24px;background:#f5fefe;"></div>
<div style="left:1135px;top:696px;width:51px;height:8px;background:#ffffff;"></div>
<div style="left:1135px;top:705px;width:51px;height:23px;background:#fff;"></div>
<div style="left:1187px;top:388px;width:74px;height:32px;background:#f0f0f0;"></div>
<div class="t s nv c" style="left:1184px;top:398px;line-height:14px;height:14px;width:80px;">数量</div>
<div style="left:1187px;top:421px;width:74px;height:24px;background:#ccffff;"></div>
<div class="t s r" style="left:1187px;top:426.5px;line-height:14px;height:14px;width:70px;"><span class="a">100</span></div>
<div style="left:1187px;top:446px;width:74px;height:24px;background:#ffffff;"></div>
<div style="left:1187px;top:471px;width:74px;height:24px;background:#f5fefe;"></div>
<div style="left:1187px;top:496px;width:74px;height:24px;background:#ffffff;"></div>
<div style="left:1187px;top:521px;width:74px;height:24px;background:#f5fefe;"></div>
<div style="left:1187px;top:546px;width:74px;height:24px;background:#ffffff;"></div>
<div style="left:1187px;top:571px;width:74px;height:24px;background:#f5fefe;"></div>
<div style="left:1187px;top:596px;width:74px;height:24px;background:#ffffff;"></div>
<div style="left:1187px;top:621px;width:74px;height:24px;background:#f5fefe;"></div>
<div style="left:1187px;top:646px;width:74px;height:24px;background:#ffffff;"></div>
<div style="left:1187px;top:671px;width:74px;height:24px;background:#f5fefe;"></div>
<div style="left:1187px;top:696px;width:74px;height:8px;background:#ffffff;"></div>
<div style="left:1187px;top:705px;width:74px;height:23px;background:#fff;"></div>
<div class="t s r" style="left:1187px;top:710px;line-height:14px;height:14px;width:70px;"><span class="a">100</span></div>
<div style="left:1262px;top:388px;width:79px;height:32px;background:#f0f0f0;"></div>
<div class="t s nv c" style="left:1259px;top:398px;line-height:14px;height:14px;width:85px;">税后单价</div>
<div style="left:1262px;top:421px;width:79px;height:24px;background:#ccffff;"></div>
<div class="t s r" style="left:1262px;top:426.5px;line-height:14px;height:14px;width:75px;"><span class="a">0</span></div>
<div style="left:1262px;top:446px;width:79px;height:24px;background:#ffffff;"></div>
<div style="left:1262px;top:471px;width:79px;height:24px;background:#f5fefe;"></div>
<div style="left:1262px;top:496px;width:79px;height:24px;background:#ffffff;"></div>
<div style="left:1262px;top:521px;width:79px;height:24px;background:#f5fefe;"></div>
<div style="left:1262px;top:546px;width:79px;height:24px;background:#ffffff;"></div>
<div style="left:1262px;top:571px;width:79px;height:24px;background:#f5fefe;"></div>
<div style="left:1262px;top:596px;width:79px;height:24px;background:#ffffff;"></div>
<div style="left:1262px;top:621px;width:79px;height:24px;background:#f5fefe;"></div>
<div style="left:1262px;top:646px;width:79px;height:24px;background:#ffffff;"></div>
<div style="left:1262px;top:671px;width:79px;height:24px;background:#f5fefe;"></div>
<div style="left:1262px;top:696px;width:79px;height:8px;background:#ffffff;"></div>
<div style="left:1262px;top:705px;width:79px;height:23px;background:#fff;"></div>
<div style="left:1342px;top:388px;width:101px;height:32px;background:#f0f0f0;"></div>
<div class="t s nv c" style="left:1339px;top:398px;line-height:14px;height:14px;width:107px;">合计金额</div>
<div style="left:1342px;top:421px;width:101px;height:24px;background:#ccffff;"></div>
<div style="left:1342px;top:446px;width:101px;height:24px;background:#ffffff;"></div>
<div style="left:1342px;top:471px;width:101px;height:24px;background:#f5fefe;"></div>
<div style="left:1342px;top:496px;width:101px;height:24px;background:#ffffff;"></div>
<div style="left:1342px;top:521px;width:101px;height:24px;background:#f5fefe;"></div>
<div style="left:1342px;top:546px;width:101px;height:24px;background:#ffffff;"></div>
<div style="left:1342px;top:571px;width:101px;height:24px;background:#f5fefe;"></div>
<div style="left:1342px;top:596px;width:101px;height:24px;background:#ffffff;"></div>
<div style="left:1342px;top:621px;width:101px;height:24px;background:#f5fefe;"></div>
<div style="left:1342px;top:646px;width:101px;height:24px;background:#ffffff;"></div>
<div style="left:1342px;top:671px;width:101px;height:24px;background:#f5fefe;"></div>
<div style="left:1342px;top:696px;width:101px;height:8px;background:#ffffff;"></div>
<div style="left:1342px;top:705px;width:101px;height:23px;background:#fff;"></div>
<div style="left:1444px;top:388px;width:59px;height:32px;background:#f0f0f0;"></div>
<div class="t s nv c" style="left:1441px;top:398px;line-height:14px;height:14px;width:65px;">参考进价</div>
<div style="left:1444px;top:421px;width:59px;height:24px;background:#ccffff;"></div>
<div class="t s r" style="left:1444px;top:426.5px;line-height:14px;height:14px;width:55px;"><span class="a">0</span></div>
<div style="left:1444px;top:446px;width:59px;height:24px;background:#eef3e8;"></div>
<div style="left:1444px;top:471px;width:59px;height:24px;background:#eef3e8;"></div>
<div style="left:1444px;top:496px;width:59px;height:24px;background:#eef3e8;"></div>
<div style="left:1444px;top:521px;width:59px;height:24px;background:#eef3e8;"></div>
<div style="left:1444px;top:546px;width:59px;height:24px;background:#eef3e8;"></div>
<div style="left:1444px;top:571px;width:59px;height:24px;background:#eef3e8;"></div>
<div style="left:1444px;top:596px;width:59px;height:24px;background:#eef3e8;"></div>
<div style="left:1444px;top:621px;width:59px;height:24px;background:#eef3e8;"></div>
<div style="left:1444px;top:646px;width:59px;height:24px;background:#eef3e8;"></div>
<div style="left:1444px;top:671px;width:59px;height:24px;background:#eef3e8;"></div>
<div style="left:1444px;top:696px;width:59px;height:8px;background:#eef3e8;"></div>
<div style="left:1444px;top:705px;width:59px;height:23px;background:#eef3e8;"></div>
<div style="left:1504px;top:388px;width:59px;height:32px;background:#f0f0f0;"></div>
<div class="t s nv c" style="left:1501px;top:391px;line-height:12px;height:12px;width:65px;">参考成本</div>
<div class="t s nv c" style="left:1501px;top:407px;line-height:12px;height:12px;width:65px;">价</div>
<div style="left:1504px;top:421px;width:59px;height:24px;background:#ccffff;"></div>
<div class="t s r" style="left:1504px;top:426.5px;line-height:14px;height:14px;width:55px;"><span class="a">0</span></div>
<div style="left:1504px;top:446px;width:59px;height:24px;background:#eef3e8;"></div>
<div style="left:1504px;top:471px;width:59px;height:24px;background:#eef3e8;"></div>
<div style="left:1504px;top:496px;width:59px;height:24px;background:#eef3e8;"></div>
<div style="left:1504px;top:521px;width:59px;height:24px;background:#eef3e8;"></div>
<div style="left:1504px;top:546px;width:59px;height:24px;background:#eef3e8;"></div>
<div style="left:1504px;top:571px;width:59px;height:24px;background:#eef3e8;"></div>
<div style="left:1504px;top:596px;width:59px;height:24px;background:#eef3e8;"></div>
<div style="left:1504px;top:621px;width:59px;height:24px;background:#eef3e8;"></div>
<div style="left:1504px;top:646px;width:59px;height:24px;background:#eef3e8;"></div>
<div style="left:1504px;top:671px;width:59px;height:24px;background:#eef3e8;"></div>
<div style="left:1504px;top:696px;width:59px;height:8px;background:#eef3e8;"></div>
<div style="left:1504px;top:705px;width:59px;height:23px;background:#eef3e8;"></div>
<div style="left:1564px;top:388px;width:59px;height:32px;background:#f0f0f0;"></div>
<div class="t s nv c" style="left:1561px;top:398px;line-height:14px;height:14px;width:65px;">目标单价</div>
<div style="left:1564px;top:421px;width:59px;height:24px;background:#ccffff;"></div>
<div class="t s r" style="left:1564px;top:426.5px;line-height:14px;height:14px;width:55px;"><span class="a">0</span></div>
<div style="left:1564px;top:446px;width:59px;height:24px;background:#ffffff;"></div>
<div style="left:1564px;top:471px;width:59px;height:24px;background:#f5fefe;"></div>
<div style="left:1564px;top:496px;width:59px;height:24px;background:#ffffff;"></div>
<div style="left:1564px;top:521px;width:59px;height:24px;background:#f5fefe;"></div>
<div style="left:1564px;top:546px;width:59px;height:24px;background:#ffffff;"></div>
<div style="left:1564px;top:571px;width:59px;height:24px;background:#f5fefe;"></div>
<div style="left:1564px;top:596px;width:59px;height:24px;background:#ffffff;"></div>
<div style="left:1564px;top:621px;width:59px;height:24px;background:#f5fefe;"></div>
<div style="left:1564px;top:646px;width:59px;height:24px;background:#ffffff;"></div>
<div style="left:1564px;top:671px;width:59px;height:24px;background:#f5fefe;"></div>
<div style="left:1564px;top:696px;width:59px;height:8px;background:#ffffff;"></div>
<div style="left:1564px;top:705px;width:59px;height:23px;background:#fff;"></div>
<div style="left:1624px;top:388px;width:59px;height:32px;background:#f0f0f0;"></div>
<div class="t s nv c" style="left:1621px;top:398px;line-height:14px;height:14px;width:65px;">目标金额</div>
<div style="left:1624px;top:421px;width:59px;height:24px;background:#ccffff;"></div>
<div class="t s r" style="left:1624px;top:426.5px;line-height:14px;height:14px;width:55px;"><span class="a">0</span></div>
<div style="left:1624px;top:446px;width:59px;height:24px;background:#ffffff;"></div>
<div style="left:1624px;top:471px;width:59px;height:24px;background:#f5fefe;"></div>
<div style="left:1624px;top:496px;width:59px;height:24px;background:#ffffff;"></div>
<div style="left:1624px;top:521px;width:59px;height:24px;background:#f5fefe;"></div>
<div style="left:1624px;top:546px;width:59px;height:24px;background:#ffffff;"></div>
<div style="left:1624px;top:571px;width:59px;height:24px;background:#f5fefe;"></div>
<div style="left:1624px;top:596px;width:59px;height:24px;background:#ffffff;"></div>
<div style="left:1624px;top:621px;width:59px;height:24px;background:#f5fefe;"></div>
<div style="left:1624px;top:646px;width:59px;height:24px;background:#ffffff;"></div>
<div style="left:1624px;top:671px;width:59px;height:24px;background:#f5fefe;"></div>
<div style="left:1624px;top:696px;width:59px;height:8px;background:#ffffff;"></div>
<div style="left:1624px;top:705px;width:59px;height:23px;background:#fff;"></div>
<div class="t s r" style="left:1624px;top:710px;line-height:14px;height:14px;width:55px;"><span class="a">0</span></div>
<div style="left:1684px;top:388px;width:59px;height:32px;background:#f0f0f0;"></div>
<div class="t s nv c" style="left:1681px;top:398px;line-height:14px;height:14px;width:65px;">单价</div>
<div style="left:1684px;top:421px;width:59px;height:24px;background:#ccffff;"></div>
<div class="t s r" style="left:1684px;top:426.5px;line-height:14px;height:14px;width:55px;"><span class="a">0</span></div>
<div style="left:1684px;top:446px;width:59px;height:24px;background:#ffffff;"></div>
<div style="left:1684px;top:471px;width:59px;height:24px;background:#f5fefe;"></div>
<div style="left:1684px;top:496px;width:59px;height:24px;background:#ffffff;"></div>
<div style="left:1684px;top:521px;width:59px;height:24px;background:#f5fefe;"></div>
<div style="left:1684px;top:546px;width:59px;height:24px;background:#ffffff;"></div>
<div style="left:1684px;top:571px;width:59px;height:24px;background:#f5fefe;"></div>
<div style="left:1684px;top:596px;width:59px;height:24px;background:#ffffff;"></div>
<div style="left:1684px;top:621px;width:59px;height:24px;background:#f5fefe;"></div>
<div style="left:1684px;top:646px;width:59px;height:24px;background:#ffffff;"></div>
<div style="left:1684px;top:671px;width:59px;height:24px;background:#f5fefe;"></div>
<div style="left:1684px;top:696px;width:59px;height:8px;background:#ffffff;"></div>
<div style="left:1684px;top:705px;width:59px;height:23px;background:#fff;"></div>
<div style="left:1744px;top:388px;width:59px;height:32px;background:#f0f0f0;"></div>
<div class="t s nv c" style="left:1741px;top:398px;line-height:14px;height:14px;width:65px;">金额</div>
<div style="left:1744px;top:421px;width:59px;height:24px;background:#ccffff;"></div>
<div class="t s r" style="left:1744px;top:426.5px;line-height:14px;height:14px;width:55px;"><span class="a">0</span></div>
<div style="left:1744px;top:446px;width:59px;height:24px;background:#ffffff;"></div>
<div style="left:1744px;top:471px;width:59px;height:24px;background:#f5fefe;"></div>
<div style="left:1744px;top:496px;width:59px;height:24px;background:#ffffff;"></div>
<div style="left:1744px;top:521px;width:59px;height:24px;background:#f5fefe;"></div>
<div style="left:1744px;top:546px;width:59px;height:24px;background:#ffffff;"></div>
<div style="left:1744px;top:571px;width:59px;height:24px;background:#f5fefe;"></div>
<div style="left:1744px;top:596px;width:59px;height:24px;background:#ffffff;"></div>
<div style="left:1744px;top:621px;width:59px;height:24px;background:#f5fefe;"></div>
<div style="left:1744px;top:646px;width:59px;height:24px;background:#ffffff;"></div>
<div style="left:1744px;top:671px;width:59px;height:24px;background:#f5fefe;"></div>
<div style="left:1744px;top:696px;width:59px;height:8px;background:#ffffff;"></div>
<div style="left:1744px;top:705px;width:59px;height:23px;background:#fff;"></div>
<div class="t s r" style="left:1744px;top:710px;line-height:14px;height:14px;width:55px;"><span class="a">0</span></div>
<div style="left:1804px;top:388px;width:59px;height:32px;background:#f0f0f0;"></div>
<div class="t s nv c" style="left:1801px;top:398px;line-height:14px;height:14px;width:65px;">成本单价</div>
<div style="left:1804px;top:421px;width:59px;height:24px;background:#ccffff;"></div>
<div class="t s r" style="left:1804px;top:426.5px;line-height:14px;height:14px;width:55px;"><span class="a">0</span></div>
<div style="left:1804px;top:446px;width:59px;height:24px;background:#eef3e8;"></div>
<div style="left:1804px;top:471px;width:59px;height:24px;background:#eef3e8;"></div>
<div style="left:1804px;top:496px;width:59px;height:24px;background:#eef3e8;"></div>
<div style="left:1804px;top:521px;width:59px;height:24px;background:#eef3e8;"></div>
<div style="left:1804px;top:546px;width:59px;height:24px;background:#eef3e8;"></div>
<div style="left:1804px;top:571px;width:59px;height:24px;background:#eef3e8;"></div>
<div style="left:1804px;top:596px;width:59px;height:24px;background:#eef3e8;"></div>
<div style="left:1804px;top:621px;width:59px;height:24px;background:#eef3e8;"></div>
<div style="left:1804px;top:646px;width:59px;height:24px;background:#eef3e8;"></div>
<div style="left:1804px;top:671px;width:59px;height:24px;background:#eef3e8;"></div>
<div style="left:1804px;top:696px;width:59px;height:8px;background:#eef3e8;"></div>
<div style="left:1804px;top:705px;width:59px;height:23px;background:#eef3e8;"></div>
<div style="left:1351px;top:421px;width:1px;height:307px;background:#777;"></div>
<div style="left:1360px;top:421px;width:1px;height:307px;background:#777;"></div>
<div style="left:1369px;top:421px;width:1px;height:307px;background:#111;"></div>
<div style="left:1378px;top:421px;width:1px;height:307px;background:#777;"></div>
<div style="left:1387px;top:421px;width:1px;height:307px;background:#777;"></div>
<div style="left:1396px;top:421px;width:1px;height:307px;background:#111;"></div>
<div style="left:1405px;top:421px;width:1px;height:307px;background:#777;"></div>
<div style="left:1414px;top:421px;width:1px;height:307px;background:#777;"></div>
<div style="left:1423px;top:421px;width:1px;height:307px;background:#d02020;"></div>
<div style="left:1432px;top:421px;width:1px;height:307px;background:#777;"></div>
<div class="t s" style="left:1425px;top:425.5px;line-height:14px;height:14px;color:#c02020;"><span class="a">0</span></div>
<div class="t s" style="left:1434px;top:425.5px;line-height:14px;height:14px;color:#c02020;"><span class="a">0</span></div>
<div class="t s" style="left:1425px;top:709.5px;line-height:14px;height:14px;color:#c02020;"><span class="a">0</span></div>
<div class="t s" style="left:1434px;top:709.5px;line-height:14px;height:14px;color:#c02020;"><span class="a">0</span></div>
<div style="left:1867px;top:387px;width:16px;height:316px;background:#f0f0f0;"></div>
<svg style="left:1870.5px;top:393px" width="8" height="6" viewBox="0 0 9 6" preserveAspectRatio="none"><path d="M0.7 5.2 L4.5 1.2 L8.3 5.2" fill="none" stroke="#555" stroke-width="2"/></svg>
<svg style="left:1870.5px;top:692px" width="8" height="6" viewBox="0 0 9 6" preserveAspectRatio="none"><path d="M0.7 0.8 L4.5 4.8 L8.3 0.8" fill="none" stroke="#555" stroke-width="2"/></svg>
<div style="left:1867px;top:404px;width:15px;height:17px;background:#cdcdcd;"></div>
<div class="t s" style="left:803px;top:760.5px;line-height:14px;height:14px;">业务部</div>
<div style="left:888px;top:757px;width:234px;height:18px;border:1px solid #7a7a7a;background:#fff;"></div>
<div class="t s" style="left:890.5px;top:760px;line-height:14px;height:14px;">保健中心</div>
<div class="t s" style="left:1161px;top:760.5px;line-height:14px;height:14px;">业务员</div>
<div style="left:1246px;top:757px;width:234px;height:18px;border:1px solid #7a7a7a;background:#fff;"></div>
<div class="t s" style="left:1248.5px;top:760px;line-height:14px;height:14px;">汪静</div>
<div style="left:1491px;top:770.5px;width:2px;height:1.3px;background:#999;"></div>
<div style="left:1498px;top:770.5px;width:2px;height:1.3px;background:#999;"></div>
<div class="t s" style="left:1517px;top:760.5px;line-height:14px;height:14px;">录入<span class="a"><span class="h"> </span>2023<span class="h">-</span>08<span class="h">-</span>11</span></div>
<div class="t s" style="left:1639px;top:760.5px;line-height:14px;height:14px;">系统管理员</div>
<div class="t s" style="left:803px;top:787.5px;line-height:14px;height:14px;">审核<span class="a"><span class="h"> </span>2023<span class="h">-</span>08<span class="h">-</span>11</span></div>
<div class="t s" style="left:923px;top:787.5px;line-height:14px;height:14px;">系统管理员</div>
<div class="t s" style="left:803px;top:814.5px;line-height:14px;height:14px;">备注</div>
<div style="left:888px;top:810px;width:950px;height:20px;border:1px solid #7a7a7a;background:#fff;"></div>
<div style="left:1822px;top:812px;width:15px;height:17px;background:#f0f0f0;"></div>
<svg style="left:1825.5px;top:814.5px" width="8" height="6" viewBox="0 0 9 6" preserveAspectRatio="none"><path d="M0.7 5.2 L4.5 1.2 L8.3 5.2" fill="none" stroke="#b0b0b0" stroke-width="1.5"/></svg>
<svg style="left:1825.5px;top:821.5px" width="8" height="6" viewBox="0 0 9 6" preserveAspectRatio="none"><path d="M0.7 0.8 L4.5 4.8 L8.3 0.8" fill="none" stroke="#b0b0b0" stroke-width="1.5"/></svg>
<svg style="left:797px;top:840px" width="14" height="17" viewBox="0 0 14 17"><path d="M0.6 0.6 H9 L13.4 5 V16.4 H0.6 Z" fill="#fff" stroke="#111" stroke-width="1.1"/><path d="M9 0.6 V5 H13.4" fill="none" stroke="#111" stroke-width="1"/><path d="M4 8.5 A3.2 3.2 0 0 1 9.5 7 M10 11 A3.2 3.2 0 0 1 4.5 12.5" fill="none" stroke="#1a8a2a" stroke-width="1.5"/><path d="M8.2 5.2 L10.8 7.6 L7.6 8.4 Z M5.8 14.3 L3.2 11.9 L6.4 11.1 Z" fill="#1a8a2a"/></svg>
<div class="t s bl" style="left:821.5px;top:840.5px;line-height:14px;height:14px;">业务</div>
<div class="t s tl" style="left:873px;top:840.5px;line-height:14px;height:14px;">库存<span class="a"><span class="h">-</span></span>˜</div>
<div class="t s tl" style="left:938px;top:840.5px;line-height:14px;height:14px;">业务量</div>
</div></body></html>
